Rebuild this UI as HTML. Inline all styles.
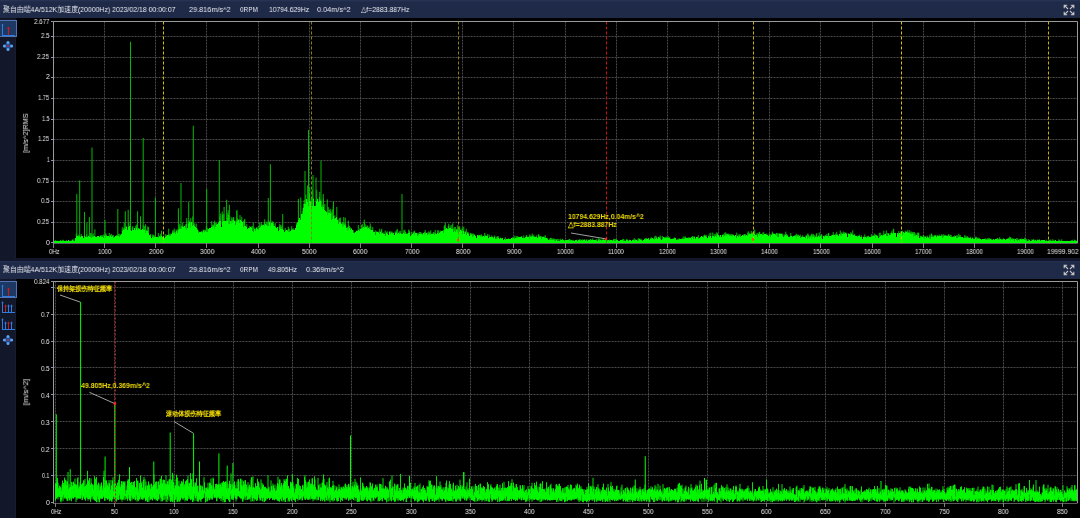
<!DOCTYPE html>
<html><head><meta charset="utf-8"><style>
html,body{margin:0;padding:0;}
body{width:1080px;height:518px;overflow:hidden;background:#12172a;position:relative;font-family:"Liberation Sans",sans-serif;}
.hdr{position:absolute;left:0;width:1080px;background:#1f2a48;}
.blk{position:absolute;left:16px;width:1064px;background:#000;}
svg{position:absolute;left:0;top:0;}
.t{position:absolute;white-space:nowrap;transform-origin:0 50%;will-change:transform;}
</style></head><body>
<div class="hdr" style="top:0;height:18.5px;background:linear-gradient(#2a3658 0,#1f2a48 2px,#1f2a48 100%)"></div>
<div style="position:absolute;left:15px;top:19px;width:1px;height:240px;background:#171c33"></div>
<div style="position:absolute;left:15px;top:279px;width:1px;height:240px;background:#171c33"></div>
<div style="position:absolute;left:0;top:18px;width:1080px;height:1px;background:#10141f"></div>
<div class="blk" style="top:18px;height:240px"></div>
<div class="hdr" style="top:260.5px;height:18px;background:linear-gradient(#28345a 0,#1f2a48 1.5px,#1f2a48 100%)"></div>
<div class="blk" style="top:278.5px;height:240px"></div>
<svg width="1080" height="518" viewBox="0 0 1080 518">
<line x1="53.5" y1="222.5" x2="1077.5" y2="222.5" stroke="#4a4a4a" stroke-dasharray="2 1"/><line x1="53.5" y1="201.5" x2="1077.5" y2="201.5" stroke="#4a4a4a" stroke-dasharray="2 1"/><line x1="53.5" y1="181.5" x2="1077.5" y2="181.5" stroke="#4a4a4a" stroke-dasharray="2 1"/><line x1="53.5" y1="160.5" x2="1077.5" y2="160.5" stroke="#4a4a4a" stroke-dasharray="2 1"/><line x1="53.5" y1="139.5" x2="1077.5" y2="139.5" stroke="#4a4a4a" stroke-dasharray="2 1"/><line x1="53.5" y1="119.5" x2="1077.5" y2="119.5" stroke="#4a4a4a" stroke-dasharray="2 1"/><line x1="53.5" y1="98.5" x2="1077.5" y2="98.5" stroke="#4a4a4a" stroke-dasharray="2 1"/><line x1="53.5" y1="77.5" x2="1077.5" y2="77.5" stroke="#4a4a4a" stroke-dasharray="2 1"/><line x1="53.5" y1="57.5" x2="1077.5" y2="57.5" stroke="#4a4a4a" stroke-dasharray="2 1"/><line x1="53.5" y1="36.5" x2="1077.5" y2="36.5" stroke="#4a4a4a" stroke-dasharray="2 1"/><line x1="104.5" y1="21.5" x2="104.5" y2="242.5" stroke="#4a4a4a" stroke-dasharray="2 1"/><line x1="155.5" y1="21.5" x2="155.5" y2="242.5" stroke="#4a4a4a" stroke-dasharray="2 1"/><line x1="206.5" y1="21.5" x2="206.5" y2="242.5" stroke="#4a4a4a" stroke-dasharray="2 1"/><line x1="258.5" y1="21.5" x2="258.5" y2="242.5" stroke="#4a4a4a" stroke-dasharray="2 1"/><line x1="309.5" y1="21.5" x2="309.5" y2="242.5" stroke="#4a4a4a" stroke-dasharray="2 1"/><line x1="360.5" y1="21.5" x2="360.5" y2="242.5" stroke="#4a4a4a" stroke-dasharray="2 1"/><line x1="411.5" y1="21.5" x2="411.5" y2="242.5" stroke="#4a4a4a" stroke-dasharray="2 1"/><line x1="462.5" y1="21.5" x2="462.5" y2="242.5" stroke="#4a4a4a" stroke-dasharray="2 1"/><line x1="513.5" y1="21.5" x2="513.5" y2="242.5" stroke="#4a4a4a" stroke-dasharray="2 1"/><line x1="565.5" y1="21.5" x2="565.5" y2="242.5" stroke="#4a4a4a" stroke-dasharray="2 1"/><line x1="616.5" y1="21.5" x2="616.5" y2="242.5" stroke="#4a4a4a" stroke-dasharray="2 1"/><line x1="667.5" y1="21.5" x2="667.5" y2="242.5" stroke="#4a4a4a" stroke-dasharray="2 1"/><line x1="718.5" y1="21.5" x2="718.5" y2="242.5" stroke="#4a4a4a" stroke-dasharray="2 1"/><line x1="769.5" y1="21.5" x2="769.5" y2="242.5" stroke="#4a4a4a" stroke-dasharray="2 1"/><line x1="820.5" y1="21.5" x2="820.5" y2="242.5" stroke="#4a4a4a" stroke-dasharray="2 1"/><line x1="872.5" y1="21.5" x2="872.5" y2="242.5" stroke="#4a4a4a" stroke-dasharray="2 1"/><line x1="923.5" y1="21.5" x2="923.5" y2="242.5" stroke="#4a4a4a" stroke-dasharray="2 1"/><line x1="974.5" y1="21.5" x2="974.5" y2="242.5" stroke="#4a4a4a" stroke-dasharray="2 1"/><line x1="1025.5" y1="21.5" x2="1025.5" y2="242.5" stroke="#4a4a4a" stroke-dasharray="2 1"/><path d="M54.75 242.1V240.8M55.25 241.6V241.4M55.75 241.6V239.9M57.75 242.2V240.7M58.25 241.7V240.9M59.75 242.2V241.1M60.25 242.2V240.5M60.75 242.2V239.9M62.75 242.2V239.9M63.25 241.7V239.8M66.25 242.2V239.9M67.25 242.2V241.2M67.75 242.2V241.2M68.25 241.4V240.6M70.25 242.2V240.6M71.25 242.2V240.9M71.75 242.2V240.7M72.25 241.3V239.3M73.75 242.2V239.4M74.25 242.2V241.0M75.25 239.0V238.2M75.75 239.0V238.6M76.25 236.7V233.4M76.75 236.7V235.7M78.25 237.8V235.8M78.75 237.8V234.5M79.75 236.6V235.9M81.25 237.2V234.1M84.25 237.1V236.6M84.75 237.1V235.2M86.25 239.9V236.2M86.75 239.9V234.1M89.25 239.0V234.6M90.25 240.0V233.0M90.75 240.0V236.4M91.25 239.7V233.2M92.25 237.6V234.8M93.25 238.2V233.3M93.75 238.2V236.1M94.25 237.3V236.2M97.25 238.3V236.8M100.25 237.0V235.2M101.75 238.4V235.1M102.25 238.3V235.4M103.75 239.0V234.4M104.25 239.6V236.4M104.75 239.6V235.6M105.25 239.3V234.5M105.75 239.3V233.1M106.25 237.4V234.5M107.75 237.2V236.2M108.75 239.1V236.3M109.25 238.8V233.0M110.25 237.1V235.1M110.75 237.1V234.8M111.25 239.5V233.8M112.75 237.1V235.1M113.25 238.8V235.2M115.75 237.5V236.6M116.25 236.8V235.0M116.75 236.8V235.9M117.25 237.4V235.0M118.75 236.7V233.7M119.25 237.5V234.2M121.25 234.9V233.4M122.25 232.8V227.2M123.25 231.3V229.3M123.75 231.3V228.3M124.25 233.9V222.5M124.75 233.9V228.0M125.25 229.9V226.6M125.75 229.9V227.0M126.25 227.6V226.2M128.75 228.6V222.5M130.25 230.6V224.3M132.25 231.1V227.5M132.75 231.1V226.1M135.75 231.2V225.8M136.75 229.4V224.5M137.25 231.5V225.6M138.25 232.5V227.9M138.75 232.5V228.1M140.75 232.9V228.8M143.25 232.1V225.3M144.75 231.0V226.3M145.25 234.9V225.7M145.75 234.9V229.8M146.25 232.6V229.9M147.75 231.8V226.4M148.25 237.1V231.1M149.25 236.2V235.0M150.25 236.8V235.0M150.75 236.8V234.0M152.75 239.8V234.5M153.25 239.2V235.0M153.75 239.2V235.8M154.75 237.8V235.7M155.25 238.9V236.9M157.25 239.0V237.2M157.75 239.0V237.3M158.75 239.4V236.6M159.25 238.6V235.7M159.75 238.6V236.0M160.25 240.1V236.6M160.75 240.1V233.8M161.25 240.0V234.5M161.75 240.0V236.6M163.25 240.1V235.8M165.25 237.6V234.4M166.25 238.0V234.6M168.75 236.4V234.2M169.75 238.5V234.3M170.25 238.3V233.6M172.25 234.5V232.1M172.75 234.5V230.2M173.75 235.2V230.6M174.25 233.8V228.5M174.75 233.8V232.2M175.25 235.2V231.8M176.25 232.3V229.7M177.75 234.4V229.3M178.75 233.8V229.4M179.25 230.3V227.5M179.75 230.3V224.1M180.75 230.4V228.1M181.25 229.9V226.1M181.75 229.9V226.0M182.25 231.6V225.8M182.75 231.6V222.6M184.25 227.4V226.0M185.75 231.1V224.5M186.25 230.9V223.9M186.75 230.9V218.1M188.25 227.1V221.5M188.75 227.1V222.1M189.25 224.3V220.6M190.25 228.5V222.5M190.75 228.5V218.1M192.75 227.4V216.4M193.75 227.4V223.6M194.75 226.5V223.2M196.25 234.2V223.7M197.25 230.7V228.6M198.75 236.3V230.5M200.25 233.3V232.2M201.25 235.1V231.0M201.75 235.1V231.9M202.25 235.7V231.6M203.25 234.7V229.6M203.75 234.7V230.1M204.25 233.1V229.8M205.75 232.9V229.9M206.25 232.6V226.3M206.75 232.6V229.9M207.25 233.1V227.9M211.75 229.8V221.2M212.75 231.5V224.6M213.25 230.9V224.6M213.75 230.9V225.8M214.25 229.6V222.4M214.75 229.6V220.6M215.75 228.2V222.9M216.25 226.4V223.2M218.25 225.4V222.7M218.75 225.4V222.1M219.75 225.2V216.6M220.75 224.8V213.5M222.25 222.5V211.5M222.75 222.5V214.7M223.75 221.8V213.8M225.75 222.2V220.9M227.25 221.8V217.8M227.75 221.8V213.1M228.25 224.5V210.2M228.75 224.5V215.0M229.25 228.1V215.2M229.75 228.1V216.3M231.25 224.6V220.9M231.75 224.6V217.3M232.25 224.0V219.5M232.75 224.0V220.3M233.25 221.4V217.3M233.75 221.4V217.1M234.25 221.5V220.7M235.25 226.9V220.6M236.75 224.3V211.1M237.25 222.0V218.0M237.75 222.0V219.3M238.75 220.8V219.4M239.75 223.7V219.6M241.75 222.0V216.8M242.25 223.9V222.2M243.75 227.8V221.0M244.25 229.3V220.1M244.75 229.3V218.8M246.75 230.2V224.2M249.75 229.2V225.9M250.25 227.9V227.5M251.25 229.4V226.7M252.25 231.8V226.0M253.25 232.9V222.7M254.25 229.5V227.5M255.75 232.1V229.0M256.25 232.5V228.0M256.75 232.5V227.1M258.25 232.4V226.3M259.75 228.9V222.6M260.25 231.5V225.4M261.25 226.6V222.2M261.75 226.6V224.5M262.25 227.2V224.7M262.75 227.2V224.9M264.25 228.5V222.6M264.75 228.5V219.3M266.25 225.8V221.7M267.25 228.0V222.6M268.25 226.8V220.2M269.75 222.7V221.5M270.25 226.7V221.8M270.75 226.7V220.3M272.25 224.2V221.1M273.25 228.8V221.8M273.75 228.8V223.8M275.25 229.4V223.2M279.25 231.6V226.4M279.75 231.6V223.8M280.25 231.9V226.9M280.75 231.9V224.9M281.75 230.0V226.5M282.25 229.9V224.8M285.25 232.3V227.9M286.25 231.0V230.1M286.75 231.0V229.8M287.25 232.2V230.0M288.25 235.0V226.6M288.75 235.0V228.9M289.25 234.2V228.7M291.75 232.1V226.1M292.25 234.2V229.2M292.75 234.2V228.8M293.25 231.1V228.4M296.75 225.7V223.3M297.25 226.4V222.0M302.75 214.8V210.9M303.25 212.8V207.6M303.75 212.8V203.8M304.25 205.3V199.9M305.75 205.0V194.5M307.75 202.9V185.3M308.25 207.9V186.1M308.75 207.9V194.6M309.25 201.6V194.0M309.75 201.6V187.3M311.25 207.0V198.3M312.25 206.8V189.7M313.25 200.2V197.9M316.75 207.4V190.1M319.25 205.8V197.2M319.75 205.8V191.8M320.25 201.5V199.5M321.25 213.8V200.8M322.25 216.5V204.7M322.75 216.5V205.8M323.25 208.4V194.1M324.75 211.5V203.9M327.25 216.3V199.4M327.75 216.3V211.7M328.25 220.3V207.1M329.25 217.3V209.7M330.25 214.9V208.7M330.75 214.9V211.5M331.75 222.7V212.6M332.25 220.4V209.5M333.25 219.8V205.6M334.75 220.1V215.3M338.25 225.1V219.5M339.75 222.9V218.0M340.25 225.8V217.5M340.75 225.8V221.7M342.25 230.2V222.3M342.75 230.2V223.3M343.25 227.0V223.6M343.75 227.0V217.0M344.75 226.3V223.2M345.25 229.0V217.7M345.75 229.0V224.2M347.25 231.9V227.2M347.75 231.9V227.5M348.25 230.7V220.7M348.75 230.7V225.6M349.25 229.1V226.0M350.25 232.5V227.4M351.25 230.9V228.0M353.25 234.4V230.3M355.25 233.0V231.7M355.75 233.0V232.3M356.75 234.9V230.3M358.25 231.4V225.1M359.75 232.2V228.5M361.25 229.8V228.4M361.75 229.8V224.9M362.25 229.4V223.8M363.75 228.4V226.7M364.25 228.9V219.6M365.75 228.3V224.5M366.75 233.3V227.9M367.25 232.3V225.4M367.75 232.3V226.1M368.75 228.6V227.8M369.25 230.9V226.6M370.25 232.7V227.2M370.75 232.7V225.8M372.75 233.0V227.0M373.25 232.9V231.6M374.25 233.0V232.0M375.25 236.3V230.4M376.75 233.2V231.2M377.75 235.0V232.8M378.25 233.8V231.7M378.75 233.8V231.9M379.75 235.2V228.7M380.25 233.2V231.8M380.75 233.2V232.4M381.25 235.3V230.6M381.75 235.3V228.7M383.75 234.5V232.4M385.25 236.5V230.5M386.75 233.9V232.2M387.25 234.7V231.3M389.75 236.9V231.2M390.75 235.2V231.6M391.25 237.3V231.7M392.25 237.3V231.7M392.75 237.3V233.1M393.25 234.2V233.1M395.25 233.9V231.3M395.75 233.9V232.7M396.25 234.0V232.3M396.75 234.0V230.1M397.25 235.4V228.9M398.75 233.9V232.7M399.25 234.9V231.5M400.25 233.9V230.8M403.75 237.3V230.4M404.75 235.3V229.7M405.25 235.8V231.6M405.75 235.8V232.2M407.25 235.4V233.2M408.75 235.7V229.5M409.25 237.6V230.6M409.75 237.6V231.8M411.75 235.5V232.3M413.25 234.0V231.8M414.25 237.8V230.7M414.75 237.8V231.4M417.75 237.1V233.3M418.25 235.7V232.7M419.75 235.0V232.0M420.25 234.9V232.1M421.25 236.4V232.7M422.75 235.8V233.7M423.25 236.9V233.0M424.25 236.3V232.6M424.75 236.3V231.8M425.25 234.6V230.1M425.75 234.6V232.9M427.25 235.6V232.3M428.75 235.1V231.3M429.25 235.9V232.5M429.75 235.9V232.3M430.25 235.8V233.5M430.75 235.8V230.3M431.75 236.2V233.8M432.25 234.6V233.8M432.75 234.6V234.2M433.25 236.7V232.6M433.75 236.7V231.8M434.75 235.8V232.7M435.25 235.3V229.9M435.75 235.3V233.4M437.75 234.6V230.4M438.25 234.9V230.2M439.25 234.9V232.4M440.25 233.3V230.5M441.25 232.6V231.3M443.25 234.5V230.0M444.25 232.7V226.2M444.75 232.7V225.2M445.25 231.9V222.7M446.25 228.9V228.1M446.75 228.9V228.1M448.25 232.4V226.0M448.75 232.4V223.7M450.25 229.4V225.6M451.75 233.0V225.0M452.75 230.6V223.4M453.75 233.2V228.4M454.75 231.6V227.0M455.25 233.2V226.9M456.25 232.5V229.0M456.75 232.5V229.6M457.25 233.5V229.2M457.75 233.5V225.0M458.25 231.5V228.5M459.25 232.8V227.5M459.75 232.8V226.2M460.25 231.1V230.6M460.75 231.1V229.4M461.25 232.8V229.7M461.75 232.8V231.1M462.25 236.1V227.4M463.25 232.1V230.6M463.75 232.1V226.6M464.75 234.6V231.7M465.75 232.5V231.1M466.25 236.3V228.8M467.75 234.2V231.8M468.25 234.8V232.5M470.25 236.1V233.2M470.75 236.1V232.8M471.25 236.3V234.1M471.75 236.3V233.5M472.75 238.3V233.8M473.25 237.0V233.7M474.25 238.8V234.1M474.75 238.8V235.4M478.75 237.0V234.7M479.25 237.3V235.0M479.75 237.3V235.1M480.25 237.5V234.9M480.75 237.5V236.2M481.25 239.5V234.3M481.75 239.5V235.6M482.25 238.0V235.8M483.25 238.4V235.9M484.75 238.4V232.9M485.25 237.1V234.9M486.75 239.3V236.1M487.25 237.0V235.5M487.75 237.0V233.9M489.25 237.5V234.6M491.75 239.6V235.4M492.75 237.9V236.7M493.25 240.3V237.6M494.25 238.4V236.5M494.75 238.4V235.5M495.75 240.1V237.8M496.75 239.6V236.8M497.25 240.4V236.9M497.75 240.4V236.2M498.25 238.9V236.4M498.75 238.9V238.1M499.25 240.1V238.9M500.25 239.8V237.6M500.75 239.8V238.0M501.25 239.7V237.8M505.25 242.0V237.2M506.75 241.0V238.8M507.25 240.2V239.0M507.75 240.2V239.2M508.25 239.6V238.3M508.75 239.6V239.5M512.25 239.8V237.8M512.75 239.8V237.3M513.25 239.3V237.3M513.75 239.3V238.2M514.75 240.1V235.8M516.25 239.1V236.2M517.25 241.0V236.0M517.75 241.0V236.8M518.25 238.3V236.9M518.75 238.3V237.1M521.25 238.7V236.5M521.75 238.7V236.0M523.75 239.5V235.5M526.25 237.9V235.4M526.75 237.9V235.2M527.25 239.9V237.5M528.75 239.1V237.2M529.25 239.7V236.0M529.75 239.7V234.4M530.75 239.3V235.5M531.25 237.6V235.8M532.25 237.4V233.6M533.25 237.8V236.5M533.75 237.8V234.8M534.25 237.9V236.3M536.25 238.0V235.3M538.25 238.0V234.7M538.75 238.0V234.1M539.25 238.4V235.7M540.25 238.1V236.5M540.75 238.1V235.9M541.75 240.0V236.3M542.75 240.0V237.6M543.25 238.2V236.6M543.75 238.2V237.3M544.25 238.7V236.5M544.75 238.7V237.2M545.25 241.2V235.1M546.25 239.4V238.7M547.25 240.0V237.7M549.25 241.9V238.8M550.25 240.7V238.0M550.75 240.7V237.8M551.25 240.7V239.8M551.75 240.7V238.0M552.75 242.2V239.0M553.25 241.0V238.3M554.25 241.8V238.7M554.75 241.8V239.3M555.75 241.6V239.2M556.25 240.9V239.0M557.25 241.7V238.8M558.75 241.7V239.0M560.25 242.2V238.7M560.75 242.2V240.3M562.25 241.7V238.7M562.75 241.7V239.2M563.75 242.2V240.3M564.25 241.6V240.6M565.75 241.1V240.5M568.25 241.8V239.7M568.75 241.8V239.8M569.25 242.2V239.2M569.75 242.2V239.2M570.25 241.8V239.7M570.75 241.8V240.1M571.25 242.2V240.1M571.75 242.2V240.0M572.25 242.0V240.0M573.25 242.2V239.8M574.25 242.2V240.9M576.75 241.1V239.7M578.25 242.2V240.9M579.25 241.4V239.3M580.25 242.0V239.2M581.25 242.2V239.9M581.75 242.2V239.9M582.75 242.1V239.3M583.75 241.0V240.1M584.25 241.4V239.0M585.25 241.7V240.3M585.75 241.7V240.6M586.75 242.2V239.1M588.75 241.3V239.8M590.25 241.6V238.8M590.75 241.6V239.4M591.25 240.8V239.6M591.75 240.8V240.3M592.75 242.2V238.3M593.25 241.4V240.0M594.75 240.8V240.2M596.25 242.2V239.1M596.75 242.2V239.8M598.25 240.7V238.3M598.75 240.7V239.9M599.25 241.9V238.6M599.75 241.9V239.7M600.25 241.0V239.5M600.75 241.0V240.2M601.75 241.8V239.6M602.25 240.8V239.7M602.75 240.8V240.0M603.25 240.9V238.4M603.75 240.9V240.5M604.25 242.2V240.3M604.75 242.2V239.6M605.25 241.7V240.2M605.75 241.7V238.9M606.25 241.7V239.0M607.25 241.9V240.0M607.75 241.9V239.9M608.75 241.7V240.0M609.75 242.0V239.5M611.75 242.2V240.1M612.25 242.2V240.3M613.25 242.2V240.4M613.75 242.2V238.8M614.25 242.2V239.1M615.25 242.2V238.9M616.25 240.9V238.9M622.25 241.3V240.0M622.75 241.3V239.0M623.25 242.2V238.9M624.25 242.2V239.6M626.25 241.0V239.3M626.75 241.0V239.8M627.25 241.5V239.3M627.75 241.5V240.4M629.25 241.1V240.2M629.75 241.1V239.7M632.75 242.2V240.7M633.25 241.0V239.8M633.75 241.0V239.7M634.25 242.2V238.2M635.25 240.7V239.2M637.25 242.2V239.6M638.25 242.0V238.2M639.25 242.1V238.5M640.75 240.5V238.7M641.75 241.7V239.2M645.25 241.9V238.0M645.75 241.9V239.1M646.25 240.5V237.9M647.75 240.2V238.9M648.25 239.9V237.8M648.75 239.9V238.0M650.75 240.2V238.0M651.25 241.3V237.2M651.75 241.3V238.5M653.25 239.8V238.8M654.25 240.8V237.7M654.75 240.8V236.4M655.75 240.3V235.7M656.75 239.2V236.7M658.25 238.3V236.9M659.25 239.7V236.8M660.25 240.2V235.6M662.25 239.9V235.9M664.25 238.9V237.0M665.75 240.7V236.7M666.25 238.6V238.5M666.75 238.6V236.6M667.25 238.8V237.5M667.75 238.8V237.5M668.25 239.3V236.2M669.25 239.1V237.9M669.75 239.1V237.1M672.75 241.8V238.6M673.75 240.1V238.6M674.25 240.0V237.4M674.75 240.0V237.7M677.25 240.9V239.0M678.25 240.9V238.7M679.25 241.9V238.4M680.25 241.2V238.8M682.25 240.2V238.0M683.25 239.5V236.5M684.75 241.8V236.5M685.25 239.3V237.9M685.75 239.3V236.6M688.25 240.2V237.2M688.75 240.2V237.9M689.25 239.3V237.4M690.75 240.0V238.0M691.25 240.6V236.9M691.75 240.6V237.0M692.25 240.2V236.6M692.75 240.2V236.1M693.25 240.2V236.6M694.25 238.4V236.4M695.75 241.0V238.2M697.25 238.3V237.3M698.25 240.4V235.2M700.75 237.6V237.2M702.75 238.5V236.8M703.25 240.4V235.7M704.25 239.8V235.5M704.75 239.8V234.5M705.25 239.4V235.6M706.25 238.4V234.9M709.25 237.8V233.6M710.25 237.2V236.3M710.75 237.2V232.8M712.25 238.8V236.1M712.75 238.8V232.6M714.25 238.9V233.9M715.75 237.1V234.3M716.25 237.7V232.4M717.25 236.2V233.7M717.75 236.2V232.8M719.25 238.3V235.7M722.25 236.6V235.1M722.75 236.6V234.8M723.25 239.3V234.0M723.75 239.3V234.9M724.75 238.1V232.7M725.75 238.7V232.3M726.25 238.1V234.1M726.75 238.1V233.7M727.25 238.0V234.0M727.75 238.0V233.8M728.25 236.5V233.7M729.25 236.9V233.9M729.75 236.9V235.2M730.25 236.6V234.2M730.75 236.6V235.5M731.75 237.1V233.9M732.25 238.1V235.2M732.75 238.1V234.2M733.25 236.2V235.6M733.75 236.2V235.9M736.75 239.1V232.6M737.75 236.7V235.6M738.75 239.3V235.1M739.25 236.6V234.2M739.75 236.6V236.1M740.25 238.2V234.2M743.75 238.7V234.4M744.25 238.8V234.7M744.75 238.8V234.0M745.25 237.3V234.2M747.75 236.6V232.6M748.25 238.8V231.3M748.75 238.8V233.4M749.25 234.9V232.7M751.25 234.9V231.0M751.75 234.9V232.7M752.25 237.9V233.3M752.75 237.9V232.4M753.75 236.8V230.7M754.25 234.7V234.0M754.75 234.7V229.6M756.25 236.9V233.3M757.75 237.6V232.9M758.75 236.6V233.9M759.25 236.5V231.9M759.75 236.5V231.9M762.75 235.5V232.6M763.75 238.3V232.2M764.25 235.2V234.8M764.75 235.2V233.8M766.25 236.1V234.1M766.75 236.1V233.5M769.25 235.6V233.4M770.75 238.2V234.1M771.25 237.6V234.7M772.25 235.0V231.6M772.75 235.0V233.1M773.25 238.6V233.6M773.75 238.6V233.9M774.25 235.0V233.6M775.75 235.5V233.9M776.25 238.3V233.3M776.75 238.3V232.8M777.25 237.6V233.4M778.25 237.5V233.3M779.75 234.8V232.9M781.25 234.9V233.5M782.25 237.1V233.6M782.75 237.1V234.7M784.25 238.4V234.2M785.75 236.1V231.7M786.25 237.5V234.6M786.75 237.5V233.9M787.25 238.9V235.2M787.75 238.9V235.0M790.25 238.9V235.8M790.75 238.9V233.0M791.75 237.3V235.6M792.25 239.4V236.7M793.75 237.2V236.9M794.75 237.4V235.5M795.25 238.2V235.1M795.75 238.2V235.5M796.25 239.9V233.7M796.75 239.9V235.3M797.25 239.3V234.7M798.25 237.9V234.8M798.75 237.9V234.8M799.25 237.4V236.2M800.25 239.8V234.6M802.25 237.7V236.2M802.75 237.7V235.2M805.75 239.3V235.5M806.75 239.7V234.9M807.75 239.7V233.5M808.25 239.1V234.3M808.75 239.1V235.4M809.25 239.5V236.4M809.75 239.5V236.9M810.25 239.5V235.6M810.75 239.5V235.9M811.25 239.5V234.5M811.75 239.5V233.7M812.75 237.8V234.7M813.25 238.4V233.9M813.75 238.4V236.1M814.25 240.1V234.9M815.25 238.1V235.9M816.25 239.4V234.1M816.75 239.4V233.1M818.25 237.3V235.3M819.25 238.2V232.5M821.25 239.1V234.2M821.75 239.1V234.5M824.25 237.8V235.7M825.25 237.9V235.0M826.75 237.1V234.0M828.25 238.8V233.0M828.75 238.8V233.3M831.25 237.1V235.9M831.75 237.1V234.8M832.25 236.4V235.4M833.25 236.3V232.1M834.75 237.1V235.5M835.25 237.9V234.5M835.75 237.9V233.5M836.75 235.7V231.8M837.75 236.2V234.2M840.25 236.6V230.5M840.75 236.6V234.4M841.25 237.9V233.3M841.75 237.9V232.4M843.25 235.7V231.5M843.75 235.7V233.1M844.75 235.1V232.1M845.25 234.4V233.8M846.25 234.5V232.6M848.25 234.7V233.0M850.25 236.9V234.7M850.75 236.9V232.2M851.25 235.4V232.8M852.25 236.3V234.5M852.75 236.3V230.3M853.25 237.9V234.8M854.75 235.8V233.7M857.25 239.4V235.5M859.25 236.7V234.6M861.25 238.9V235.2M863.25 238.2V236.5M864.75 238.9V234.4M866.75 239.2V236.3M867.75 238.2V236.1M868.25 239.6V235.7M868.75 239.6V236.2M871.25 238.4V234.2M871.75 238.4V235.8M873.75 239.3V235.4M874.25 237.0V233.5M874.75 237.0V235.7M875.25 239.1V234.4M875.75 239.1V235.1M876.25 237.2V234.9M876.75 237.2V234.9M879.25 239.3V232.8M880.25 238.7V232.7M881.75 236.4V235.8M882.25 237.2V234.5M883.75 237.4V230.8M884.75 235.6V234.0M885.25 235.1V233.6M886.25 238.4V230.4M887.25 237.7V232.9M888.25 234.9V233.1M888.75 234.9V233.3M890.75 237.8V232.8M891.75 237.4V231.2M892.25 235.4V232.9M893.25 233.6V229.4M893.75 233.6V228.8M895.25 233.8V232.8M898.25 234.9V233.4M898.75 234.9V231.1M900.25 235.1V232.9M900.75 235.1V231.3M901.25 236.7V232.1M901.75 236.7V231.0M902.25 235.8V230.7M903.25 233.5V232.5M905.25 233.4V230.6M906.25 234.4V231.3M907.25 233.6V231.8M907.75 233.6V229.8M908.75 235.2V231.9M909.25 237.4V233.0M909.75 237.4V230.2M910.75 235.0V232.3M911.25 235.6V231.5M912.25 234.7V233.2M912.75 234.7V231.9M913.25 238.3V233.8M913.75 238.3V232.1M914.25 236.9V232.0M914.75 236.9V234.8M915.25 237.2V233.4M916.25 236.4V235.6M917.25 239.1V232.7M917.75 239.1V234.5M918.25 236.5V232.6M918.75 236.5V232.8M920.25 240.3V235.8M920.75 240.3V236.0M921.25 239.2V236.2M921.75 239.2V236.5M923.25 240.0V234.9M923.75 240.0V236.8M924.25 239.7V236.2M924.75 239.7V236.9M925.75 238.4V236.0M927.25 238.1V235.6M928.75 239.3V237.1M929.25 239.8V236.7M929.75 239.8V234.6M930.25 239.9V236.4M931.25 237.6V233.6M931.75 237.6V233.9M932.75 238.3V235.4M933.75 238.3V236.4M934.25 238.0V235.2M935.25 238.8V234.9M935.75 238.8V235.3M937.25 237.7V234.9M938.25 237.1V235.9M939.25 237.0V234.6M941.25 237.4V234.3M941.75 237.4V235.5M942.75 239.3V235.2M943.25 237.5V234.2M943.75 237.5V236.8M944.25 237.0V235.6M944.75 237.0V234.8M945.75 240.2V235.0M946.25 237.4V235.5M947.75 237.6V235.6M948.25 238.4V234.7M948.75 238.4V234.0M950.25 238.2V234.7M951.25 238.0V235.1M952.25 239.0V236.7M953.75 239.1V236.0M954.75 238.5V235.5M956.75 239.0V235.3M957.25 239.0V235.2M958.75 239.4V233.7M959.75 239.8V235.3M960.25 237.8V235.1M961.75 240.5V237.3M962.75 238.2V237.5M964.75 241.3V235.2M965.25 240.4V235.8M966.75 240.9V236.6M967.25 238.9V236.1M967.75 238.9V237.1M968.75 239.1V237.3M970.25 239.5V236.7M970.75 239.5V238.1M972.25 239.3V237.8M972.75 239.3V237.4M973.25 239.8V238.8M975.75 240.7V236.6M976.25 241.0V236.9M976.75 241.0V238.5M977.25 240.6V237.7M977.75 240.6V238.3M978.75 239.9V237.6M979.25 239.7V238.1M980.75 241.0V238.8M981.25 241.2V239.6M983.75 240.3V240.0M984.25 240.8V239.7M984.75 240.8V238.7M985.25 242.0V239.7M985.75 242.0V238.4M986.25 242.2V239.1M987.25 241.1V238.5M987.75 241.1V238.7M988.25 242.2V238.4M988.75 242.2V238.8M989.25 241.2V238.3M989.75 241.2V238.4M991.25 242.2V238.7M993.25 240.2V239.2M993.75 240.2V239.2M995.25 240.3V239.1M996.25 240.8V239.1M996.75 240.8V239.3M997.25 242.2V238.1M997.75 242.2V238.0M998.25 240.8V239.9M998.75 240.8V238.8M999.25 240.9V238.9M999.75 240.9V237.2M1000.25 240.4V239.1M1001.75 240.5V238.8M1002.25 240.5V239.6M1002.75 240.5V239.6M1003.25 240.3V238.8M1003.75 240.3V238.3M1004.75 240.3V239.1M1007.25 241.5V238.9M1007.75 241.5V238.8M1008.25 240.2V238.0M1008.75 240.2V238.7M1009.25 240.8V237.8M1009.75 240.8V236.7M1010.25 242.2V237.8M1010.75 242.2V237.2M1011.25 241.8V238.6M1011.75 241.8V239.0M1012.25 240.8V239.2M1012.75 240.8V238.0M1013.75 239.9V239.0M1014.75 241.5V238.6M1016.75 242.2V238.0M1017.75 242.2V238.5M1019.25 242.2V239.0M1019.75 242.2V239.9M1020.25 240.4V238.8M1021.25 240.8V239.3M1021.75 240.8V238.5M1022.75 241.0V240.2M1024.75 240.8V237.6M1025.25 240.6V238.4M1026.25 241.6V239.7M1026.75 241.6V239.0M1028.75 242.2V239.1M1031.75 241.5V239.4M1033.25 240.9V238.8M1034.75 241.6V239.7M1035.25 240.9V239.8M1037.25 241.2V239.5M1038.75 241.4V240.8M1039.25 241.0V239.1M1040.75 242.2V240.4M1041.75 242.2V240.1M1046.25 241.6V239.6M1048.75 242.2V240.1M1049.75 242.2V240.0M1050.25 242.2V239.5M1050.75 242.2V240.9M1051.25 242.2V240.8M1052.25 242.2V239.3M1053.75 242.2V239.7M1055.25 241.4V240.6M1056.75 242.1V241.1M1058.75 241.6V239.5M1059.75 241.7V239.7M1061.75 242.2V239.3M1063.25 242.2V241.1M1065.75 241.7V241.0M1066.75 242.2V240.8M1067.25 242.2V241.2M1069.25 242.2V241.1M1071.25 241.8V240.1M1071.75 241.8V241.0M1072.25 242.2V239.8M1073.75 242.2V241.4M1074.25 242.2V239.6M1074.75 242.2V240.0M1075.25 242.2V240.1M1076.75 242.2V240.7" stroke="#00f000" stroke-width="0.8" fill="none"/><path d="M76.80 243V193.9M79.70 243V180.4M84.50 243V212.0M86.90 243V222.9M89.40 243V217.1M92.00 243V147.5M94.90 243V229.4M105.00 243V220.0M117.80 243V209.0M125.30 243V211.3M128.20 243V209.8M130.50 243V41.8M137.60 243V211.3M140.50 243V216.3M143.20 243V138.0M145.60 243V224.3M148.50 243V227.2M155.40 243V197.5M158.30 243V233.0M161.50 243V230.8M168.70 243V228.7M178.40 243V208.4M181.00 243V183.0M183.20 243V228.7M188.70 243V201.9M193.30 243V125.8M206.70 243V188.8M219.30 243V160.0M224.10 243V207.0M226.60 243V199.7M229.40 243V204.8M237.00 243V209.8M240.00 243V215.0M268.30 243V198.0M270.40 243V164.2M282.70 243V214.0M298.40 243V199.0M300.80 243V197.5M308.50 243V130.0M305.00 243V171.0M313.00 243V175.0M316.00 243V177.5M321.00 243V160.6M323.40 243V198.6M333.50 243V201.4M336.80 243V206.9M364.40 243V222.5M370.20 243V223.4M402.00 243V194.0" stroke="#00bc00" stroke-width="1" fill="none"/><path d="M54.5 243V240.8M55.5 243V240.6M56.5 243V240.7M57.5 243V241.2M58.5 243V240.7M59.5 243V241.1M60.5 243V241.2M61.5 243V240.8M62.5 243V240.9M63.5 243V240.7M64.5 243V240.9M65.5 243V241.2M66.5 243V241.2M67.5 243V240.8M68.5 243V240.4M69.5 243V240.5M70.5 243V241.2M71.5 243V240.5M72.5 243V240.3M73.5 243V241.2M74.5 243V241.2M75.5 243V238.0M76.5 243V235.7M77.5 243V235.7M78.5 243V236.8M79.5 243V235.6M80.5 243V237.1M81.5 243V236.2M82.5 243V236.1M83.5 243V238.2M84.5 243V236.1M85.5 243V236.8M86.5 243V236.6M87.5 243V237.0M88.5 243V235.8M89.5 243V237.0M90.5 243V236.7M91.5 243V238.3M92.5 243V236.6M93.5 243V237.2M94.5 243V236.3M95.5 243V236.7M96.5 243V236.9M97.5 243V235.8M98.5 243V236.2M99.5 243V236.6M100.5 243V236.0M101.5 243V237.4M102.5 243V237.3M103.5 243V238.0M104.5 243V236.1M105.5 243V238.3M106.5 243V236.4M107.5 243V236.2M108.5 243V236.0M109.5 243V237.3M110.5 243V236.1M111.5 243V236.5M112.5 243V236.1M113.5 243V237.8M114.5 243V236.8M115.5 243V236.1M116.5 243V235.8M117.5 243V235.5M118.5 243V235.7M119.5 243V236.5M120.5 243V235.1M121.5 243V233.6M122.5 243V231.4M123.5 243V230.2M124.5 243V230.2M125.5 243V228.9M126.5 243V226.6M127.5 243V229.5M128.5 243V227.3M129.5 243V225.7M130.5 243V229.6M131.5 243V230.5M132.5 243V230.1M133.5 243V229.8M134.5 243V227.8M135.5 243V230.2M136.5 243V228.4M137.5 243V229.9M138.5 243V228.8M139.5 243V228.9M140.5 243V229.9M141.5 243V229.7M142.5 243V229.3M143.5 243V230.3M144.5 243V230.0M145.5 243V232.8M146.5 243V230.9M147.5 243V230.8M148.5 243V233.3M149.5 243V235.2M150.5 243V235.8M151.5 243V238.0M152.5 243V237.2M153.5 243V237.8M154.5 243V236.8M155.5 243V237.3M156.5 243V237.1M157.5 243V237.1M158.5 243V238.4M159.5 243V237.4M160.5 243V236.9M161.5 243V236.3M162.5 243V237.0M163.5 243V236.4M164.5 243V237.8M165.5 243V236.6M166.5 243V235.7M167.5 243V234.7M168.5 243V234.8M169.5 243V236.1M170.5 243V236.1M171.5 243V233.9M172.5 243V232.9M173.5 243V233.1M174.5 243V232.8M175.5 243V234.2M176.5 243V231.0M177.5 243V233.4M178.5 243V229.6M179.5 243V228.8M180.5 243V229.4M181.5 243V228.9M182.5 243V226.8M183.5 243V227.1M184.5 243V226.4M185.5 243V228.0M186.5 243V229.8M187.5 243V227.6M188.5 243V224.3M189.5 243V222.4M190.5 243V227.5M191.5 243V222.3M192.5 243V226.4M193.5 243V225.1M194.5 243V225.5M195.5 243V227.3M196.5 243V228.3M197.5 243V229.7M198.5 243V232.5M199.5 243V232.1M200.5 243V232.3M201.5 243V232.1M202.5 243V233.4M203.5 243V231.4M204.5 243V232.1M205.5 243V231.2M206.5 243V231.6M207.5 243V232.1M208.5 243V229.1M209.5 243V228.3M210.5 243V227.7M211.5 243V226.8M212.5 243V226.5M213.5 243V226.0M214.5 243V228.6M215.5 243V226.9M216.5 243V225.4M217.5 243V223.7M218.5 243V222.7M219.5 243V221.4M220.5 243V221.1M221.5 243V226.5M222.5 243V221.5M223.5 243V220.8M224.5 243V221.0M225.5 243V221.2M226.5 243V220.9M227.5 243V220.8M228.5 243V223.5M229.5 243V223.5M230.5 243V221.2M231.5 243V223.6M232.5 243V223.0M233.5 243V220.4M234.5 243V220.5M235.5 243V225.1M236.5 243V221.7M237.5 243V221.0M238.5 243V219.8M239.5 243V222.7M240.5 243V220.3M241.5 243V221.0M242.5 243V222.3M243.5 243V226.8M244.5 243V226.4M245.5 243V225.5M246.5 243V226.6M247.5 243V228.8M248.5 243V228.1M249.5 243V228.2M250.5 243V226.9M251.5 243V227.5M252.5 243V230.8M253.5 243V231.9M254.5 243V228.5M255.5 243V231.1M256.5 243V228.4M257.5 243V228.6M258.5 243V229.9M259.5 243V227.9M260.5 243V226.6M261.5 243V225.6M262.5 243V226.2M263.5 243V224.9M264.5 243V225.8M265.5 243V224.4M266.5 243V224.8M267.5 243V226.2M268.5 243V225.8M269.5 243V221.7M270.5 243V225.7M271.5 243V222.9M272.5 243V223.2M273.5 243V225.8M274.5 243V226.2M275.5 243V227.3M276.5 243V227.8M277.5 243V227.4M278.5 243V230.6M279.5 243V229.5M280.5 243V228.9M281.5 243V229.0M282.5 243V228.9M283.5 243V229.5M284.5 243V231.6M285.5 243V231.3M286.5 243V230.0M287.5 243V231.2M288.5 243V231.6M289.5 243V232.1M290.5 243V230.6M291.5 243V230.3M292.5 243V230.1M293.5 243V229.9M294.5 243V230.4M295.5 243V227.5M296.5 243V224.7M297.5 243V222.6M298.5 243V220.0M299.5 243V217.9M300.5 243V219.9M301.5 243V213.9M302.5 243V213.8M303.5 243V208.0M304.5 243V204.3M305.5 243V204.0M306.5 243V199.1M307.5 243V201.9M308.5 243V205.6M309.5 243V200.6M310.5 243V201.2M311.5 243V206.0M312.5 243V205.8M313.5 243V199.2M314.5 243V206.1M315.5 243V205.5M316.5 243V200.6M317.5 243V199.2M318.5 243V202.3M319.5 243V201.1M320.5 243V200.5M321.5 243V206.6M322.5 243V209.1M323.5 243V207.4M324.5 243V209.9M325.5 243V211.4M326.5 243V212.0M327.5 243V215.3M328.5 243V212.7M329.5 243V213.0M330.5 243V213.9M331.5 243V219.9M332.5 243V219.4M333.5 243V216.2M334.5 243V219.1M335.5 243V218.3M336.5 243V217.1M337.5 243V219.7M338.5 243V224.1M339.5 243V221.9M340.5 243V223.2M341.5 243V224.2M342.5 243V226.5M343.5 243V226.0M344.5 243V225.3M345.5 243V225.5M346.5 243V227.9M347.5 243V230.9M348.5 243V229.7M349.5 243V228.1M350.5 243V229.9M351.5 243V229.3M352.5 243V230.1M353.5 243V233.4M354.5 243V232.5M355.5 243V232.0M356.5 243V231.2M357.5 243V231.3M358.5 243V230.4M359.5 243V230.7M360.5 243V229.1M361.5 243V228.8M362.5 243V228.4M363.5 243V227.4M364.5 243V227.7M365.5 243V227.3M366.5 243V227.0M367.5 243V229.4M368.5 243V227.6M369.5 243V229.2M370.5 243V230.3M371.5 243V230.1M372.5 243V230.1M373.5 243V231.9M374.5 243V232.0M375.5 243V235.3M376.5 243V232.2M377.5 243V232.1M378.5 243V232.8M379.5 243V233.9M380.5 243V232.2M381.5 243V234.3M382.5 243V233.4M383.5 243V233.5M384.5 243V233.6M385.5 243V235.5M386.5 243V232.9M387.5 243V233.7M388.5 243V234.6M389.5 243V232.4M390.5 243V234.2M391.5 243V233.2M392.5 243V234.1M393.5 243V233.2M394.5 243V234.6M395.5 243V232.9M396.5 243V233.0M397.5 243V234.1M398.5 243V232.6M399.5 243V233.9M400.5 243V232.9M401.5 243V234.3M402.5 243V234.1M403.5 243V232.9M404.5 243V234.3M405.5 243V233.8M406.5 243V233.6M407.5 243V234.1M408.5 243V232.9M409.5 243V233.3M410.5 243V235.7M411.5 243V234.5M412.5 243V233.9M413.5 243V233.0M414.5 243V234.5M415.5 243V233.3M416.5 243V233.2M417.5 243V236.1M418.5 243V234.6M419.5 243V234.0M420.5 243V233.9M421.5 243V233.5M422.5 243V234.8M423.5 243V233.3M424.5 243V235.3M425.5 243V233.6M426.5 243V233.3M427.5 243V234.6M428.5 243V234.1M429.5 243V234.9M430.5 243V234.8M431.5 243V233.5M432.5 243V233.6M433.5 243V234.3M434.5 243V234.8M435.5 243V234.3M436.5 243V233.6M437.5 243V233.2M438.5 243V233.9M439.5 243V232.7M440.5 243V232.3M441.5 243V230.8M442.5 243V230.9M443.5 243V233.4M444.5 243V230.0M445.5 243V228.6M446.5 243V227.9M447.5 243V228.5M448.5 243V228.9M449.5 243V228.3M450.5 243V228.4M451.5 243V228.7M452.5 243V228.9M453.5 243V232.2M454.5 243V230.6M455.5 243V232.2M456.5 243V230.0M457.5 243V232.3M458.5 243V230.5M459.5 243V231.8M460.5 243V230.1M461.5 243V230.5M462.5 243V233.7M463.5 243V231.1M464.5 243V233.6M465.5 243V231.5M466.5 243V235.3M467.5 243V232.7M468.5 243V233.8M469.5 243V235.7M470.5 243V235.1M471.5 243V235.3M472.5 243V237.3M473.5 243V235.6M474.5 243V235.0M475.5 243V235.6M476.5 243V237.9M477.5 243V235.2M478.5 243V236.0M479.5 243V236.3M480.5 243V236.5M481.5 243V237.2M482.5 243V237.0M483.5 243V235.9M484.5 243V237.4M485.5 243V236.1M486.5 243V236.2M487.5 243V236.0M488.5 243V237.7M489.5 243V236.5M490.5 243V236.5M491.5 243V236.5M492.5 243V236.9M493.5 243V238.4M494.5 243V237.4M495.5 243V239.1M496.5 243V238.6M497.5 243V238.5M498.5 243V237.9M499.5 243V239.1M500.5 243V238.1M501.5 243V238.7M502.5 243V238.3M503.5 243V240.3M504.5 243V238.9M505.5 243V240.1M506.5 243V239.2M507.5 243V239.2M508.5 243V238.6M509.5 243V239.2M510.5 243V239.2M511.5 243V238.4M512.5 243V238.8M513.5 243V237.8M514.5 243V239.1M515.5 243V237.5M516.5 243V237.5M517.5 243V237.7M518.5 243V237.3M519.5 243V237.1M520.5 243V237.1M521.5 243V237.2M522.5 243V238.3M523.5 243V237.6M524.5 243V237.5M525.5 243V237.4M526.5 243V236.7M527.5 243V236.8M528.5 243V236.9M529.5 243V238.7M530.5 243V237.3M531.5 243V236.6M532.5 243V236.4M533.5 243V236.8M534.5 243V236.9M535.5 243V236.8M536.5 243V237.0M537.5 243V237.6M538.5 243V237.0M539.5 243V236.8M540.5 243V237.1M541.5 243V239.0M542.5 243V237.1M543.5 243V237.2M544.5 243V237.7M545.5 243V238.3M546.5 243V238.1M547.5 243V239.0M548.5 243V239.6M549.5 243V240.4M550.5 243V239.7M551.5 243V239.7M552.5 243V239.5M553.5 243V240.0M554.5 243V240.8M555.5 243V240.6M556.5 243V239.9M557.5 243V240.6M558.5 243V240.7M559.5 243V240.6M560.5 243V239.8M561.5 243V239.9M562.5 243V240.0M563.5 243V240.1M564.5 243V240.5M565.5 243V240.1M566.5 243V240.1M567.5 243V240.4M568.5 243V240.2M569.5 243V240.8M570.5 243V240.8M571.5 243V241.2M572.5 243V241.0M573.5 243V241.2M574.5 243V241.2M575.5 243V240.2M576.5 243V240.1M577.5 243V240.8M578.5 243V240.2M579.5 243V240.4M580.5 243V240.8M581.5 243V240.4M582.5 243V240.6M583.5 243V240.0M584.5 243V240.4M585.5 243V240.7M586.5 243V239.9M587.5 243V240.8M588.5 243V240.1M589.5 243V239.9M590.5 243V240.6M591.5 243V239.8M592.5 243V240.3M593.5 243V239.8M594.5 243V239.8M595.5 243V239.8M596.5 243V240.7M597.5 243V240.6M598.5 243V239.7M599.5 243V240.9M600.5 243V240.0M601.5 243V240.8M602.5 243V239.8M603.5 243V239.9M604.5 243V239.8M605.5 243V240.3M606.5 243V240.7M607.5 243V240.9M608.5 243V240.2M609.5 243V241.0M610.5 243V239.8M611.5 243V240.4M612.5 243V240.5M613.5 243V240.0M614.5 243V241.2M615.5 243V241.1M616.5 243V239.9M617.5 243V240.0M618.5 243V241.2M619.5 243V240.7M620.5 243V240.4M621.5 243V240.0M622.5 243V240.3M623.5 243V241.2M624.5 243V241.2M625.5 243V240.5M626.5 243V240.0M627.5 243V240.3M628.5 243V240.8M629.5 243V240.1M630.5 243V240.3M631.5 243V240.6M632.5 243V240.1M633.5 243V240.0M634.5 243V240.7M635.5 243V239.7M636.5 243V240.3M637.5 243V240.5M638.5 243V240.6M639.5 243V239.4M640.5 243V239.5M641.5 243V239.7M642.5 243V240.6M643.5 243V239.9M644.5 243V239.3M645.5 243V239.7M646.5 243V239.0M647.5 243V239.2M648.5 243V238.9M649.5 243V239.7M650.5 243V238.8M651.5 243V238.9M652.5 243V238.3M653.5 243V238.8M654.5 243V239.6M655.5 243V239.3M656.5 243V238.2M657.5 243V238.6M658.5 243V237.3M659.5 243V238.4M660.5 243V239.2M661.5 243V239.7M662.5 243V238.9M663.5 243V237.3M664.5 243V237.8M665.5 243V238.3M666.5 243V237.6M667.5 243V237.8M668.5 243V238.3M669.5 243V238.1M670.5 243V239.0M671.5 243V238.5M672.5 243V238.8M673.5 243V239.1M674.5 243V238.6M675.5 243V238.4M676.5 243V240.0M677.5 243V239.9M678.5 243V239.6M679.5 243V238.7M680.5 243V239.1M681.5 243V239.2M682.5 243V239.2M683.5 243V238.5M684.5 243V239.1M685.5 243V238.1M686.5 243V238.1M687.5 243V238.2M688.5 243V239.2M689.5 243V238.3M690.5 243V238.1M691.5 243V239.6M692.5 243V237.8M693.5 243V239.2M694.5 243V237.4M695.5 243V238.9M696.5 243V237.2M697.5 243V237.3M698.5 243V239.4M699.5 243V237.9M700.5 243V236.5M701.5 243V236.4M702.5 243V236.5M703.5 243V237.7M704.5 243V236.3M705.5 243V236.0M706.5 243V237.1M707.5 243V238.1M708.5 243V235.8M709.5 243V236.8M710.5 243V236.2M711.5 243V237.9M712.5 243V236.1M713.5 243V236.2M714.5 243V236.8M715.5 243V236.1M716.5 243V236.7M717.5 243V235.2M718.5 243V235.3M719.5 243V237.3M720.5 243V235.3M721.5 243V236.6M722.5 243V235.0M723.5 243V237.1M724.5 243V236.1M725.5 243V234.9M726.5 243V235.6M727.5 243V235.3M728.5 243V235.1M729.5 243V235.9M730.5 243V235.6M731.5 243V236.0M732.5 243V237.1M733.5 243V235.2M734.5 243V236.0M735.5 243V235.2M736.5 243V238.1M737.5 243V235.5M738.5 243V236.5M739.5 243V235.6M740.5 243V236.6M741.5 243V235.5M742.5 243V235.1M743.5 243V235.7M744.5 243V234.7M745.5 243V236.3M746.5 243V234.8M747.5 243V235.6M748.5 243V235.4M749.5 243V233.9M750.5 243V234.4M751.5 243V233.9M752.5 243V233.6M753.5 243V235.8M754.5 243V233.7M755.5 243V234.9M756.5 243V235.3M757.5 243V236.6M758.5 243V234.2M759.5 243V235.5M760.5 243V233.8M761.5 243V234.3M762.5 243V234.5M763.5 243V234.5M764.5 243V234.2M765.5 243V234.2M766.5 243V235.1M767.5 243V235.1M768.5 243V236.2M769.5 243V234.6M770.5 243V237.2M771.5 243V234.8M772.5 243V234.0M773.5 243V234.3M774.5 243V234.0M775.5 243V234.5M776.5 243V235.6M777.5 243V236.6M778.5 243V236.5M779.5 243V233.8M780.5 243V234.3M781.5 243V233.9M782.5 243V236.1M783.5 243V237.1M784.5 243V235.5M785.5 243V235.0M786.5 243V235.6M787.5 243V235.6M788.5 243V236.5M789.5 243V236.9M790.5 243V236.3M791.5 243V236.3M792.5 243V237.2M793.5 243V236.2M794.5 243V236.4M795.5 243V236.9M796.5 243V238.9M797.5 243V236.3M798.5 243V236.6M799.5 243V236.4M800.5 243V237.7M801.5 243V236.9M802.5 243V236.7M803.5 243V237.1M804.5 243V236.6M805.5 243V238.3M806.5 243V236.3M807.5 243V238.7M808.5 243V238.0M809.5 243V238.5M810.5 243V236.6M811.5 243V238.5M812.5 243V236.8M813.5 243V237.3M814.5 243V238.0M815.5 243V237.1M816.5 243V236.8M817.5 243V236.8M818.5 243V236.3M819.5 243V237.2M820.5 243V236.2M821.5 243V238.1M822.5 243V238.7M823.5 243V236.0M824.5 243V236.8M825.5 243V235.8M826.5 243V236.1M827.5 243V236.0M828.5 243V237.7M829.5 243V235.6M830.5 243V235.7M831.5 243V236.1M832.5 243V235.4M833.5 243V235.3M834.5 243V235.2M835.5 243V236.9M836.5 243V234.7M837.5 243V235.2M838.5 243V235.8M839.5 243V234.2M840.5 243V235.6M841.5 243V236.4M842.5 243V234.3M843.5 243V234.1M844.5 243V234.1M845.5 243V233.4M846.5 243V233.5M847.5 243V236.9M848.5 243V233.7M849.5 243V233.9M850.5 243V235.9M851.5 243V234.4M852.5 243V235.3M853.5 243V234.9M854.5 243V234.8M855.5 243V236.2M856.5 243V236.0M857.5 243V236.9M858.5 243V235.5M859.5 243V235.7M860.5 243V236.9M861.5 243V236.8M862.5 243V238.7M863.5 243V237.2M864.5 243V237.3M865.5 243V237.0M866.5 243V237.7M867.5 243V236.8M868.5 243V238.3M869.5 243V237.3M870.5 243V237.4M871.5 243V237.4M872.5 243V236.2M873.5 243V236.3M874.5 243V236.0M875.5 243V238.1M876.5 243V236.2M877.5 243V236.2M878.5 243V238.1M879.5 243V236.7M880.5 243V235.9M881.5 243V235.4M882.5 243V236.2M883.5 243V234.9M884.5 243V234.6M885.5 243V234.1M886.5 243V236.1M887.5 243V235.8M888.5 243V233.9M889.5 243V235.4M890.5 243V235.2M891.5 243V233.4M892.5 243V234.4M893.5 243V232.6M894.5 243V232.6M895.5 243V232.8M896.5 243V236.5M897.5 243V233.1M898.5 243V233.9M899.5 243V233.2M900.5 243V234.1M901.5 243V233.2M902.5 243V234.8M903.5 243V232.1M904.5 243V232.7M905.5 243V232.1M906.5 243V232.4M907.5 243V232.6M908.5 243V232.9M909.5 243V232.8M910.5 243V233.8M911.5 243V233.6M912.5 243V233.7M913.5 243V236.8M914.5 243V235.9M915.5 243V236.2M916.5 243V235.4M917.5 243V237.1M918.5 243V235.5M919.5 243V237.6M920.5 243V237.8M921.5 243V237.1M922.5 243V237.4M923.5 243V238.1M924.5 243V238.7M925.5 243V237.4M926.5 243V238.4M927.5 243V236.6M928.5 243V238.3M929.5 243V238.6M930.5 243V238.9M931.5 243V236.6M932.5 243V236.6M933.5 243V237.2M934.5 243V236.1M935.5 243V236.4M936.5 243V236.5M937.5 243V236.0M938.5 243V236.1M939.5 243V236.0M940.5 243V235.9M941.5 243V236.4M942.5 243V238.3M943.5 243V236.5M944.5 243V236.0M945.5 243V236.2M946.5 243V236.4M947.5 243V236.1M948.5 243V236.7M949.5 243V236.3M950.5 243V237.0M951.5 243V237.0M952.5 243V237.4M953.5 243V236.6M954.5 243V236.8M955.5 243V236.4M956.5 243V238.0M957.5 243V238.0M958.5 243V236.7M959.5 243V237.3M960.5 243V236.8M961.5 243V237.3M962.5 243V237.2M963.5 243V237.8M964.5 243V238.4M965.5 243V237.9M966.5 243V237.7M967.5 243V237.9M968.5 243V238.0M969.5 243V237.7M970.5 243V238.2M971.5 243V238.9M972.5 243V238.3M973.5 243V238.8M974.5 243V238.5M975.5 243V238.4M976.5 243V240.0M977.5 243V238.7M978.5 243V238.9M979.5 243V238.7M980.5 243V239.2M981.5 243V240.2M982.5 243V239.3M983.5 243V239.3M984.5 243V239.4M985.5 243V239.5M986.5 243V239.7M987.5 243V239.9M988.5 243V240.3M989.5 243V240.2M990.5 243V239.3M991.5 243V240.2M992.5 243V239.5M993.5 243V239.2M994.5 243V239.7M995.5 243V239.3M996.5 243V239.4M997.5 243V239.8M998.5 243V239.8M999.5 243V239.9M1000.5 243V239.4M1001.5 243V239.5M1002.5 243V239.5M1003.5 243V239.0M1004.5 243V239.3M1005.5 243V239.7M1006.5 243V238.9M1007.5 243V239.3M1008.5 243V239.2M1009.5 243V239.8M1010.5 243V241.2M1011.5 243V240.0M1012.5 243V239.8M1013.5 243V238.9M1014.5 243V240.5M1015.5 243V239.2M1016.5 243V240.0M1017.5 243V241.1M1018.5 243V239.7M1019.5 243V240.7M1020.5 243V239.4M1021.5 243V239.7M1022.5 243V239.3M1023.5 243V239.4M1024.5 243V239.8M1025.5 243V239.6M1026.5 243V240.6M1027.5 243V240.7M1028.5 243V241.2M1029.5 243V239.7M1030.5 243V241.0M1031.5 243V240.5M1032.5 243V240.1M1033.5 243V239.9M1034.5 243V240.6M1035.5 243V239.9M1036.5 243V240.6M1037.5 243V240.2M1038.5 243V240.4M1039.5 243V240.0M1040.5 243V241.1M1041.5 243V240.1M1042.5 243V240.2M1043.5 243V240.2M1044.5 243V240.1M1045.5 243V240.6M1046.5 243V240.6M1047.5 243V240.8M1048.5 243V241.2M1049.5 243V241.2M1050.5 243V241.2M1051.5 243V241.2M1052.5 243V241.2M1053.5 243V240.7M1054.5 243V240.6M1055.5 243V240.4M1056.5 243V241.1M1057.5 243V240.6M1058.5 243V240.6M1059.5 243V240.7M1060.5 243V240.6M1061.5 243V241.2M1062.5 243V241.0M1063.5 243V240.9M1064.5 243V240.9M1065.5 243V240.7M1066.5 243V241.2M1067.5 243V240.8M1068.5 243V240.7M1069.5 243V241.2M1070.5 243V241.2M1071.5 243V240.8M1072.5 243V241.2M1073.5 243V241.2M1074.5 243V241.2M1075.5 243V241.2M1076.5 243V241.2" stroke="#00ff00" stroke-width="1" fill="none" shape-rendering="crispEdges"/><line x1="163.5" y1="21.5" x2="163.5" y2="242.5" stroke="#d8c000" stroke-dasharray="3 2"/><line x1="311.5" y1="21.5" x2="311.5" y2="242.5" stroke="#8c7e10" stroke-dasharray="3 2"/><line x1="458.5" y1="21.5" x2="458.5" y2="242.5" stroke="#8c7e10" stroke-dasharray="3 2"/><line x1="753.5" y1="21.5" x2="753.5" y2="242.5" stroke="#d0b800" stroke-dasharray="3 2"/><line x1="901.5" y1="21.5" x2="901.5" y2="242.5" stroke="#d8c000" stroke-dasharray="3 2"/><line x1="1048.5" y1="21.5" x2="1048.5" y2="242.5" stroke="#c8b400" stroke-dasharray="3 2"/><line x1="606.5" y1="21.5" x2="606.5" y2="242.5" stroke="#d01010" stroke-dasharray="3 2"/><path d="M53.5 244V21.5H1077.5V243" stroke="#9a9a9a" fill="none"/><line x1="53.5" y1="243.5" x2="1077.5" y2="243.5" stroke="#5a5a5a"/><line x1="51" y1="242.5" x2="53.5" y2="242.5" stroke="#8a96b4"/><line x1="51" y1="222.5" x2="53.5" y2="222.5" stroke="#8a96b4"/><line x1="51" y1="201.5" x2="53.5" y2="201.5" stroke="#8a96b4"/><line x1="51" y1="181.5" x2="53.5" y2="181.5" stroke="#8a96b4"/><line x1="51" y1="160.5" x2="53.5" y2="160.5" stroke="#8a96b4"/><line x1="51" y1="139.5" x2="53.5" y2="139.5" stroke="#8a96b4"/><line x1="51" y1="119.5" x2="53.5" y2="119.5" stroke="#8a96b4"/><line x1="51" y1="98.5" x2="53.5" y2="98.5" stroke="#8a96b4"/><line x1="51" y1="77.5" x2="53.5" y2="77.5" stroke="#8a96b4"/><line x1="51" y1="57.5" x2="53.5" y2="57.5" stroke="#8a96b4"/><line x1="51" y1="36.5" x2="53.5" y2="36.5" stroke="#8a96b4"/><line x1="51" y1="21.5" x2="53.5" y2="21.5" stroke="#8a96b4"/><line x1="53.5" y1="243" x2="53.5" y2="248" stroke="#808080"/><line x1="104.5" y1="243" x2="104.5" y2="248" stroke="#808080"/><line x1="155.5" y1="243" x2="155.5" y2="248" stroke="#808080"/><line x1="206.5" y1="243" x2="206.5" y2="248" stroke="#808080"/><line x1="258.5" y1="243" x2="258.5" y2="248" stroke="#808080"/><line x1="309.5" y1="243" x2="309.5" y2="248" stroke="#808080"/><line x1="360.5" y1="243" x2="360.5" y2="248" stroke="#808080"/><line x1="411.5" y1="243" x2="411.5" y2="248" stroke="#808080"/><line x1="462.5" y1="243" x2="462.5" y2="248" stroke="#808080"/><line x1="513.5" y1="243" x2="513.5" y2="248" stroke="#808080"/><line x1="565.5" y1="243" x2="565.5" y2="248" stroke="#808080"/><line x1="616.5" y1="243" x2="616.5" y2="248" stroke="#808080"/><line x1="667.5" y1="243" x2="667.5" y2="248" stroke="#808080"/><line x1="718.5" y1="243" x2="718.5" y2="248" stroke="#808080"/><line x1="769.5" y1="243" x2="769.5" y2="248" stroke="#808080"/><line x1="820.5" y1="243" x2="820.5" y2="248" stroke="#808080"/><line x1="872.5" y1="243" x2="872.5" y2="248" stroke="#808080"/><line x1="923.5" y1="243" x2="923.5" y2="248" stroke="#808080"/><line x1="974.5" y1="243" x2="974.5" y2="248" stroke="#808080"/><line x1="1025.5" y1="243" x2="1025.5" y2="248" stroke="#808080"/><line x1="571" y1="233" x2="605.5" y2="238.8" stroke="#c8c8c8" stroke-width="0.8"/><circle cx="606" cy="239" r="1.3" fill="#ff2020"/><circle cx="458" cy="240" r="1.2" fill="#ff4020"/><circle cx="753" cy="239.5" r="1.2" fill="#ff4020"/>
<line x1="53.5" y1="475.5" x2="1077.5" y2="475.5" stroke="#4a4a4a" stroke-dasharray="2 1"/><line x1="53.5" y1="448.5" x2="1077.5" y2="448.5" stroke="#4a4a4a" stroke-dasharray="2 1"/><line x1="53.5" y1="421.5" x2="1077.5" y2="421.5" stroke="#4a4a4a" stroke-dasharray="2 1"/><line x1="53.5" y1="394.5" x2="1077.5" y2="394.5" stroke="#4a4a4a" stroke-dasharray="2 1"/><line x1="53.5" y1="367.5" x2="1077.5" y2="367.5" stroke="#4a4a4a" stroke-dasharray="2 1"/><line x1="53.5" y1="341.5" x2="1077.5" y2="341.5" stroke="#4a4a4a" stroke-dasharray="2 1"/><line x1="53.5" y1="314.5" x2="1077.5" y2="314.5" stroke="#4a4a4a" stroke-dasharray="2 1"/><line x1="53.5" y1="287.5" x2="1077.5" y2="287.5" stroke="#4a4a4a" stroke-dasharray="2 1"/><line x1="55.5" y1="281.5" x2="55.5" y2="502.7" stroke="#4a4a4a" stroke-dasharray="2 1"/><line x1="114.5" y1="281.5" x2="114.5" y2="502.7" stroke="#4a4a4a" stroke-dasharray="2 1"/><line x1="174.5" y1="281.5" x2="174.5" y2="502.7" stroke="#4a4a4a" stroke-dasharray="2 1"/><line x1="233.5" y1="281.5" x2="233.5" y2="502.7" stroke="#4a4a4a" stroke-dasharray="2 1"/><line x1="292.5" y1="281.5" x2="292.5" y2="502.7" stroke="#4a4a4a" stroke-dasharray="2 1"/><line x1="351.5" y1="281.5" x2="351.5" y2="502.7" stroke="#4a4a4a" stroke-dasharray="2 1"/><line x1="411.5" y1="281.5" x2="411.5" y2="502.7" stroke="#4a4a4a" stroke-dasharray="2 1"/><line x1="470.5" y1="281.5" x2="470.5" y2="502.7" stroke="#4a4a4a" stroke-dasharray="2 1"/><line x1="529.5" y1="281.5" x2="529.5" y2="502.7" stroke="#4a4a4a" stroke-dasharray="2 1"/><line x1="588.5" y1="281.5" x2="588.5" y2="502.7" stroke="#4a4a4a" stroke-dasharray="2 1"/><line x1="648.5" y1="281.5" x2="648.5" y2="502.7" stroke="#4a4a4a" stroke-dasharray="2 1"/><line x1="707.5" y1="281.5" x2="707.5" y2="502.7" stroke="#4a4a4a" stroke-dasharray="2 1"/><line x1="766.5" y1="281.5" x2="766.5" y2="502.7" stroke="#4a4a4a" stroke-dasharray="2 1"/><line x1="825.5" y1="281.5" x2="825.5" y2="502.7" stroke="#4a4a4a" stroke-dasharray="2 1"/><line x1="885.5" y1="281.5" x2="885.5" y2="502.7" stroke="#4a4a4a" stroke-dasharray="2 1"/><line x1="944.5" y1="281.5" x2="944.5" y2="502.7" stroke="#4a4a4a" stroke-dasharray="2 1"/><line x1="1003.5" y1="281.5" x2="1003.5" y2="502.7" stroke="#4a4a4a" stroke-dasharray="2 1"/><line x1="1062.5" y1="281.5" x2="1062.5" y2="502.7" stroke="#4a4a4a" stroke-dasharray="2 1"/><path d="M55.5 500.7V483.4M56.0 498.9V483.4M56.5 498.5V484.1M57.0 496.4V481.7M57.5 497.5V478.0M58.0 499.4V482.9M58.5 496.4V488.2M59.0 497.1V490.8M59.5 497.1V485.7M60.0 495.2V486.4M60.5 501.4V487.2M61.0 502.4V488.3M61.5 500.3V490.8M62.0 498.7V484.4M62.5 496.8V480.6M63.0 501.2V485.9M63.5 494.8V483.0M64.0 498.7V484.3M64.5 497.7V477.6M65.0 498.7V485.2M65.5 497.2V479.7M66.0 498.7V480.5M66.5 498.7V485.2M67.0 501.1V481.4M67.5 500.6V481.4M68.0 500.6V472.0M68.5 498.0V489.1M69.0 498.2V484.2M69.5 500.4V487.9M70.0 500.4V486.8M70.5 498.1V487.4M71.0 498.9V487.4M71.5 501.2V481.9M72.0 496.0V485.3M72.5 497.8V486.0M73.0 498.7V482.3M73.5 498.4V481.6M74.0 498.2V490.4M74.5 497.0V483.5M75.0 493.9V478.5M75.5 497.2V484.4M76.0 502.1V486.4M76.5 498.4V484.5M77.0 500.0V488.0M77.5 498.3V478.4M78.0 498.3V477.3M78.5 498.5V488.6M79.0 498.1V485.6M79.5 498.5V487.1M80.0 498.9V482.3M80.5 498.7V484.8M81.0 497.8V484.6M81.5 495.0V484.6M82.0 500.2V484.5M82.5 499.9V483.1M83.0 497.7V487.7M83.5 496.3V480.5M84.0 497.7V480.5M84.5 499.2V486.9M85.0 499.2V478.9M85.5 500.8V486.0M86.0 495.5V489.4M86.5 497.3V484.8M87.0 498.5V483.6M87.5 498.6V470.8M88.0 500.7V480.1M88.5 498.8V480.8M89.0 499.3V482.8M89.5 499.3V478.1M90.0 498.9V491.9M90.5 501.8V484.7M91.0 499.3V478.2M91.5 497.1V483.2M92.0 494.3V488.3M92.5 496.5V484.2M93.0 499.5V485.2M93.5 499.4V489.8M94.0 496.1V484.7M94.5 500.3V476.2M95.0 500.4V483.1M95.5 501.0V478.7M96.0 501.0V486.4M96.5 502.2V477.1M97.0 502.2V492.2M97.5 496.5V484.6M98.0 498.8V488.8M98.5 499.7V482.6M99.0 502.4V483.7M99.5 502.1V490.0M100.0 498.5V486.2M100.5 498.3V486.7M101.0 499.4V483.9M101.5 498.7V482.4M102.0 497.4V485.5M102.5 498.9V490.1M103.0 497.8V487.8M103.5 496.7V477.1M104.0 495.9V470.8M104.5 500.7V487.6M105.0 501.0V479.8M105.5 498.1V487.3M106.0 494.9V480.5M106.5 498.4V480.5M107.0 498.4V487.3M107.5 499.9V485.1M108.0 498.6V483.2M108.5 498.6V486.4M109.0 499.4V480.1M109.5 501.4V483.2M110.0 499.0V493.3M110.5 500.4V489.5M111.0 500.4V480.0M111.5 501.5V485.4M112.0 501.8V487.4M112.5 499.2V480.5M113.0 499.2V477.3M113.5 496.6V491.1M114.0 496.2V484.2M114.5 498.7V489.7M115.0 494.7V483.2M115.5 500.6V483.2M116.0 498.3V485.5M116.5 501.6V485.5M117.0 500.1V487.1M117.5 499.2V482.5M118.0 496.5V488.0M118.5 500.0V479.8M119.0 499.5V485.9M119.5 494.7V474.3M120.0 495.9V486.3M120.5 499.4V487.2M121.0 499.3V484.2M121.5 499.5V481.2M122.0 501.6V481.2M122.5 499.6V484.4M123.0 494.9V481.9M123.5 499.7V481.7M124.0 498.0V481.2M124.5 496.1V482.7M125.0 500.3V481.5M125.5 495.8V493.8M126.0 499.1V490.3M126.5 497.3V489.8M127.0 499.0V485.6M127.5 500.8V480.8M128.0 497.9V479.4M128.5 495.1V479.4M129.0 499.2V485.2M129.5 500.2V486.9M130.0 501.1V482.8M130.5 501.3V482.8M131.0 497.6V489.2M131.5 495.6V481.8M132.0 500.5V486.4M132.5 498.1V485.1M133.0 498.6V481.9M133.5 498.8V481.9M134.0 498.8V485.6M134.5 496.9V480.9M135.0 500.2V491.2M135.5 500.2V487.2M136.0 499.0V488.2M136.5 495.3V478.0M137.0 501.7V488.8M137.5 500.4V480.7M138.0 499.1V480.7M138.5 501.2V491.4M139.0 499.4V488.8M139.5 499.4V483.0M140.0 499.5V485.9M140.5 496.8V475.4M141.0 496.9V484.4M141.5 499.3V483.1M142.0 499.3V481.4M142.5 499.3V487.8M143.0 500.1V487.6M143.5 498.1V479.6M144.0 498.7V476.9M144.5 497.3V489.7M145.0 498.3V479.2M145.5 501.2V486.2M146.0 501.2V481.6M146.5 500.2V490.2M147.0 500.1V485.1M147.5 501.9V485.6M148.0 501.9V488.9M148.5 497.7V481.4M149.0 501.7V483.9M149.5 496.3V485.4M150.0 500.0V490.4M150.5 499.3V488.7M151.0 499.3V483.7M151.5 498.8V483.7M152.0 500.2V488.3M152.5 500.5V486.6M153.0 495.4V485.1M153.5 497.6V485.0M154.0 499.0V474.5M154.5 499.4V484.2M155.0 499.3V484.9M155.5 498.2V481.9M156.0 500.6V490.0M156.5 500.1V481.3M157.0 500.1V488.6M157.5 501.0V489.0M158.0 500.5V482.2M158.5 499.0V481.3M159.0 499.4V491.9M159.5 493.9V484.8M160.0 494.8V478.8M160.5 497.4V478.8M161.0 501.4V483.6M161.5 498.5V475.8M162.0 501.3V483.3M162.5 501.3V483.4M163.0 500.2V480.0M163.5 496.3V479.5M164.0 500.0V490.2M164.5 495.1V480.0M165.0 499.3V483.7M165.5 496.2V483.7M166.0 501.6V475.4M166.5 496.0V484.2M167.0 502.0V486.2M167.5 499.5V481.3M168.0 494.4V480.9M168.5 494.5V484.6M169.0 500.7V479.5M169.5 496.4V479.3M170.0 496.7V479.3M170.5 501.8V491.0M171.0 501.8V482.4M171.5 500.8V479.7M172.0 499.6V485.3M172.5 502.1V472.8M173.0 500.9V474.7M173.5 494.7V482.0M174.0 502.5V487.7M174.5 502.5V488.3M175.0 494.9V484.8M175.5 499.7V485.6M176.0 499.7V479.3M176.5 496.9V474.7M177.0 501.9V487.0M177.5 501.9V477.6M178.0 502.0V485.8M178.5 500.6V485.8M179.0 494.2V480.8M179.5 501.5V486.7M180.0 501.5V491.8M180.5 499.9V483.7M181.0 498.2V484.5M181.5 497.0V481.3M182.0 498.6V481.3M182.5 498.6V482.3M183.0 500.1V487.8M183.5 498.5V479.1M184.0 495.4V487.4M184.5 497.8V484.3M185.0 501.4V487.5M185.5 499.9V481.2M186.0 499.9V484.6M186.5 500.6V480.2M187.0 500.1V480.5M187.5 500.9V479.0M188.0 499.0V475.5M188.5 495.4V486.2M189.0 499.0V482.7M189.5 496.9V483.1M190.0 498.6V483.1M190.5 500.2V473.2M191.0 499.3V479.2M191.5 498.9V479.2M192.0 500.0V491.2M192.5 502.1V486.8M193.0 502.1V473.3M193.5 499.9V485.0M194.0 500.8V485.0M194.5 494.1V486.9M195.0 496.2V482.6M195.5 498.1V482.6M196.0 501.0V486.6M196.5 496.0V478.2M197.0 498.9V490.4M197.5 501.4V485.9M198.0 501.5V485.7M198.5 501.5V492.2M199.0 499.7V491.2M199.5 499.7V484.5M200.0 497.4V484.5M200.5 500.6V485.7M201.0 502.1V486.1M201.5 499.3V490.5M202.0 498.9V485.5M202.5 498.9V486.5M203.0 495.3V490.1M203.5 497.6V490.1M204.0 498.2V477.2M204.5 493.0V482.2M205.0 494.4V487.9M205.5 502.4V491.7M206.0 501.4V487.8M206.5 496.9V488.1M207.0 501.5V487.2M207.5 501.2V489.1M208.0 498.0V482.8M208.5 498.1V489.6M209.0 500.2V487.4M209.5 500.2V482.6M210.0 497.0V487.3M210.5 497.9V483.2M211.0 499.7V478.5M211.5 498.8V485.3M212.0 495.7V485.3M212.5 499.7V488.7M213.0 498.1V477.6M213.5 494.2V478.6M214.0 496.6V487.1M214.5 497.6V489.5M215.0 498.2V489.4M215.5 497.0V484.0M216.0 498.1V489.5M216.5 501.2V483.7M217.0 501.2V484.6M217.5 497.2V484.6M218.0 498.0V488.6M218.5 496.3V484.2M219.0 498.2V484.2M219.5 498.9V488.4M220.0 498.6V484.5M220.5 498.1V484.5M221.0 501.1V483.1M221.5 498.3V486.8M222.0 500.2V482.4M222.5 496.0V482.4M223.0 502.3V487.7M223.5 499.9V481.0M224.0 496.2V482.5M224.5 502.3V482.5M225.0 497.8V481.9M225.5 502.1V481.9M226.0 497.4V481.0M226.5 499.1V488.4M227.0 495.5V482.7M227.5 499.0V491.7M228.0 499.2V487.8M228.5 500.4V488.3M229.0 500.6V484.0M229.5 501.9V480.8M230.0 502.1V485.7M230.5 494.3V484.1M231.0 495.8V473.4M231.5 498.9V490.0M232.0 500.0V484.3M232.5 499.3V488.9M233.0 498.4V484.4M233.5 499.9V486.3M234.0 495.9V483.1M234.5 495.2V481.3M235.0 497.9V485.0M235.5 498.5V488.3M236.0 501.5V488.1M236.5 499.3V488.6M237.0 499.2V481.7M237.5 496.3V488.2M238.0 495.8V479.2M238.5 496.2V479.2M239.0 496.2V481.7M239.5 497.5V491.0M240.0 497.2V491.8M240.5 498.1V478.7M241.0 499.4V478.7M241.5 498.3V484.9M242.0 498.7V479.9M242.5 501.7V486.7M243.0 501.7V485.1M243.5 499.3V481.2M244.0 498.0V488.0M244.5 495.7V484.1M245.0 499.6V480.2M245.5 496.7V480.2M246.0 500.3V490.8M246.5 496.1V484.5M247.0 496.1V487.2M247.5 500.0V492.5M248.0 499.4V482.2M248.5 499.2V489.0M249.0 499.2V486.4M249.5 498.2V484.7M250.0 499.6V486.8M250.5 497.0V487.1M251.0 501.7V479.6M251.5 495.0V477.3M252.0 498.4V477.3M252.5 501.3V488.1M253.0 498.0V476.4M253.5 497.8V486.6M254.0 501.6V487.4M254.5 498.7V487.9M255.0 499.5V491.0M255.5 499.5V483.2M256.0 495.5V486.8M256.5 500.9V486.0M257.0 499.9V487.2M257.5 500.5V478.7M258.0 497.7V485.3M258.5 494.8V481.6M259.0 493.1V483.4M259.5 498.6V487.4M260.0 500.8V489.6M260.5 500.2V489.6M261.0 498.3V479.4M261.5 497.6V488.6M262.0 500.7V482.9M262.5 501.4V485.6M263.0 497.5V483.9M263.5 497.8V485.1M264.0 501.9V488.6M264.5 501.9V486.9M265.0 499.3V487.6M265.5 500.9V486.8M266.0 500.5V490.2M266.5 498.4V488.2M267.0 496.0V488.9M267.5 499.1V488.9M268.0 497.8V475.3M268.5 497.8V487.7M269.0 497.9V486.8M269.5 500.0V492.1M270.0 498.5V490.1M270.5 498.6V491.4M271.0 496.9V480.4M271.5 498.1V485.9M272.0 495.4V486.1M272.5 500.1V490.2M273.0 499.9V483.6M273.5 498.6V485.5M274.0 500.1V488.4M274.5 500.2V488.4M275.0 497.7V484.6M275.5 499.3V491.1M276.0 498.1V490.9M276.5 499.0V489.7M277.0 500.4V486.1M277.5 500.4V482.9M278.0 501.1V476.8M278.5 501.1V484.3M279.0 495.4V488.3M279.5 501.8V479.5M280.0 499.5V479.5M280.5 499.1V487.0M281.0 498.3V485.2M281.5 501.3V483.0M282.0 494.5V486.0M282.5 497.3V488.9M283.0 501.6V484.7M283.5 500.2V483.4M284.0 498.2V479.2M284.5 499.7V480.7M285.0 502.0V480.7M285.5 502.0V481.9M286.0 498.0V478.9M286.5 498.5V478.9M287.0 496.7V488.6M287.5 497.6V475.3M288.0 501.5V485.9M288.5 500.1V485.9M289.0 501.4V488.3M289.5 501.4V488.7M290.0 500.2V490.4M290.5 498.7V481.7M291.0 498.1V483.4M291.5 501.2V482.7M292.0 500.6V482.7M292.5 497.4V484.4M293.0 497.4V481.8M293.5 499.9V487.7M294.0 499.6V485.8M294.5 500.6V493.1M295.0 500.2V491.7M295.5 502.1V488.6M296.0 497.1V484.1M296.5 498.6V484.1M297.0 499.0V485.6M297.5 499.1V477.9M298.0 500.8V488.3M298.5 495.0V479.0M299.0 499.6V493.0M299.5 499.7V485.3M300.0 499.6V488.5M300.5 498.6V486.1M301.0 499.3V489.6M301.5 497.2V489.0M302.0 500.8V492.3M302.5 500.1V485.4M303.0 497.7V484.6M303.5 496.3V491.4M304.0 495.3V486.8M304.5 498.6V477.1M305.0 499.9V475.1M305.5 499.9V480.2M306.0 495.4V484.7M306.5 498.2V488.3M307.0 498.6V482.1M307.5 499.7V487.1M308.0 499.7V482.8M308.5 499.6V481.7M309.0 499.5V489.8M309.5 498.4V479.5M310.0 500.1V486.0M310.5 495.8V483.6M311.0 498.7V486.2M311.5 498.8V483.7M312.0 497.5V478.3M312.5 499.1V478.3M313.0 501.4V487.0M313.5 498.8V484.5M314.0 500.2V490.5M314.5 499.0V476.3M315.0 499.8V479.5M315.5 498.3V486.9M316.0 499.3V488.6M316.5 495.9V489.9M317.0 500.5V489.9M317.5 496.8V490.6M318.0 500.1V477.8M318.5 500.1V485.4M319.0 497.6V485.0M319.5 496.6V490.0M320.0 497.0V483.9M320.5 501.2V487.5M321.0 500.5V487.5M321.5 499.2V487.7M322.0 498.5V482.6M322.5 501.2V482.8M323.0 499.1V479.7M323.5 499.9V474.4M324.0 498.5V478.8M324.5 501.4V484.3M325.0 501.6V486.7M325.5 497.5V485.8M326.0 497.6V484.9M326.5 500.1V492.0M327.0 500.6V481.9M327.5 495.6V487.9M328.0 500.7V486.7M328.5 498.7V489.0M329.0 500.6V478.6M329.5 497.7V477.6M330.0 502.3V487.3M330.5 495.1V487.3M331.0 500.4V488.1M331.5 500.2V488.0M332.0 499.9V486.5M332.5 500.3V485.7M333.0 501.7V480.9M333.5 498.4V485.8M334.0 501.0V484.9M334.5 500.3V491.5M335.0 496.4V490.3M335.5 498.2V489.7M336.0 497.2V485.9M336.5 500.3V487.8M337.0 501.4V486.8M337.5 501.4V490.9M338.0 500.1V490.9M338.5 501.0V489.0M339.0 497.6V484.4M339.5 496.6V489.0M340.0 498.3V487.1M340.5 501.9V490.1M341.0 496.5V489.3M341.5 500.1V487.5M342.0 497.1V486.5M342.5 501.0V488.6M343.0 497.8V489.3M343.5 497.9V486.5M344.0 497.4V490.3M344.5 498.3V487.8M345.0 499.5V484.5M345.5 497.8V483.5M346.0 499.5V489.3M346.5 499.5V486.9M347.0 497.6V485.0M347.5 497.1V488.7M348.0 498.6V486.7M348.5 500.8V483.8M349.0 500.5V484.4M349.5 498.5V487.4M350.0 499.7V486.9M350.5 499.7V484.5M351.0 499.6V486.3M351.5 497.9V490.4M352.0 498.5V488.3M352.5 499.0V485.9M353.0 497.3V481.8M353.5 500.2V487.4M354.0 497.2V487.1M354.5 496.9V484.6M355.0 500.7V478.9M355.5 497.9V487.4M356.0 497.9V481.7M356.5 497.7V485.2M357.0 501.3V483.1M357.5 502.0V486.0M358.0 498.9V485.3M358.5 501.7V489.2M359.0 501.7V494.5M359.5 501.6V491.7M360.0 499.6V489.5M360.5 495.2V477.4M361.0 499.4V491.1M361.5 500.6V490.8M362.0 500.6V488.5M362.5 500.8V482.6M363.0 495.8V483.6M363.5 500.8V486.4M364.0 497.8V486.4M364.5 499.7V488.8M365.0 499.7V488.2M365.5 496.8V488.4M366.0 497.5V487.1M366.5 500.8V486.0M367.0 500.1V487.9M367.5 501.4V487.3M368.0 497.0V489.6M368.5 499.5V491.1M369.0 499.5V487.4M369.5 500.1V488.4M370.0 500.7V482.2M370.5 501.0V482.8M371.0 502.2V489.6M371.5 497.7V486.3M372.0 497.6V485.8M372.5 497.8V483.5M373.0 500.9V490.3M373.5 499.8V490.3M374.0 500.9V488.5M374.5 497.0V487.7M375.0 497.8V488.1M375.5 498.6V484.6M376.0 498.4V492.9M376.5 497.2V486.7M377.0 496.8V484.5M377.5 496.5V487.2M378.0 501.5V491.5M378.5 500.2V490.9M379.0 501.1V491.4M379.5 501.1V483.7M380.0 496.8V487.5M380.5 500.4V484.1M381.0 496.5V484.1M381.5 499.1V488.4M382.0 500.9V485.2M382.5 501.4V488.7M383.0 497.9V478.1M383.5 497.9V488.6M384.0 497.7V488.2M384.5 499.7V488.9M385.0 498.9V492.8M385.5 500.1V485.9M386.0 499.1V486.7M386.5 502.4V489.8M387.0 496.1V487.2M387.5 498.5V488.2M388.0 501.6V489.0M388.5 497.6V490.1M389.0 501.0V490.1M389.5 491.5V481.3M390.0 497.3V491.5M390.5 499.6V479.5M391.0 500.8V488.3M391.5 501.4V488.3M392.0 494.0V475.5M392.5 496.9V487.1M393.0 500.3V486.3M393.5 500.3V495.3M394.0 496.3V487.1M394.5 501.8V483.5M395.0 501.2V489.1M395.5 501.6V491.1M396.0 498.0V484.6M396.5 498.3V486.0M397.0 499.9V493.0M397.5 498.2V484.3M398.0 501.3V484.3M398.5 498.1V491.0M399.0 500.2V490.8M399.5 500.1V488.0M400.0 500.1V492.4M400.5 500.9V473.9M401.0 500.6V491.7M401.5 500.3V489.8M402.0 500.0V490.1M402.5 500.0V493.2M403.0 498.3V487.5M403.5 501.4V489.5M404.0 498.9V488.3M404.5 499.3V483.4M405.0 498.2V488.2M405.5 497.7V487.7M406.0 502.0V491.6M406.5 502.0V489.6M407.0 497.5V488.4M407.5 498.2V485.8M408.0 498.7V486.0M408.5 496.3V490.1M409.0 496.2V485.7M409.5 497.9V490.9M410.0 497.9V492.2M410.5 496.2V482.7M411.0 502.2V492.3M411.5 498.5V489.3M412.0 496.4V492.1M412.5 496.2V488.8M413.0 498.5V488.6M413.5 498.8V490.7M414.0 499.1V486.5M414.5 501.3V487.9M415.0 499.5V483.0M415.5 500.3V490.1M416.0 500.8V486.5M416.5 498.6V487.0M417.0 498.6V486.8M417.5 502.3V485.6M418.0 500.2V490.7M418.5 501.5V492.2M419.0 501.5V485.0M419.5 500.6V492.5M420.0 497.1V483.5M420.5 499.6V492.8M421.0 499.6V489.2M421.5 499.6V488.8M422.0 499.8V492.2M422.5 500.8V487.2M423.0 500.8V490.2M423.5 502.4V485.4M424.0 498.7V490.7M424.5 499.4V488.1M425.0 500.5V491.3M425.5 500.8V489.8M426.0 499.0V492.7M426.5 500.8V493.0M427.0 499.1V485.9M427.5 496.0V486.8M428.0 497.8V486.9M428.5 500.4V486.9M429.0 501.8V480.2M429.5 501.8V481.3M430.0 497.3V489.3M430.5 499.0V480.7M431.0 497.2V484.9M431.5 499.2V484.6M432.0 501.1V484.6M432.5 501.1V489.3M433.0 499.7V488.8M433.5 497.8V486.7M434.0 501.2V485.4M434.5 501.9V485.4M435.0 499.9V494.3M435.5 500.5V494.7M436.0 500.9V487.4M436.5 500.1V476.2M437.0 499.5V492.1M437.5 499.5V488.5M438.0 499.6V485.9M438.5 498.8V486.1M439.0 501.6V486.2M439.5 496.8V487.3M440.0 498.0V481.4M440.5 499.1V487.2M441.0 499.1V485.1M441.5 499.5V489.3M442.0 501.1V489.5M442.5 500.5V489.5M443.0 498.6V487.5M443.5 498.6V491.9M444.0 498.2V487.4M444.5 499.5V490.1M445.0 499.5V490.7M445.5 501.7V487.0M446.0 501.7V483.0M446.5 499.4V480.5M447.0 499.4V487.0M447.5 500.6V491.6M448.0 497.8V488.4M448.5 501.1V488.4M449.0 499.5V484.7M449.5 501.0V481.1M450.0 500.6V486.0M450.5 500.6V483.8M451.0 500.6V488.0M451.5 500.4V489.4M452.0 501.1V489.4M452.5 496.2V492.1M453.0 501.7V484.7M453.5 499.2V482.7M454.0 499.2V490.7M454.5 498.5V490.7M455.0 498.6V490.9M455.5 500.8V485.6M456.0 502.0V488.3M456.5 501.1V490.8M457.0 496.6V484.8M457.5 499.7V488.9M458.0 498.0V489.5M458.5 498.6V485.9M459.0 500.3V488.4M459.5 499.2V487.3M460.0 501.2V479.6M460.5 501.2V485.4M461.0 499.4V485.4M461.5 496.4V489.2M462.0 497.5V490.4M462.5 498.5V486.8M463.0 498.3V485.2M463.5 496.4V472.1M464.0 499.0V472.1M464.5 500.3V489.2M465.0 497.0V489.2M465.5 498.2V490.5M466.0 500.7V486.5M466.5 500.7V491.7M467.0 500.2V482.4M467.5 498.3V489.4M468.0 498.8V493.7M468.5 496.3V490.1M469.0 498.0V488.0M469.5 496.6V478.6M470.0 500.3V492.9M470.5 497.3V488.9M471.0 497.9V493.4M471.5 500.2V486.8M472.0 499.6V486.0M472.5 500.1V488.8M473.0 500.9V493.5M473.5 500.9V495.9M474.0 500.8V486.5M474.5 501.8V492.0M475.0 499.2V491.4M475.5 496.9V483.9M476.0 501.7V489.2M476.5 497.9V486.1M477.0 497.7V486.1M477.5 501.2V490.5M478.0 499.7V490.3M478.5 499.4V484.9M479.0 501.2V488.1M479.5 498.5V494.1M480.0 499.7V483.7M480.5 499.8V483.7M481.0 499.8V491.2M481.5 499.8V487.5M482.0 501.7V488.4M482.5 500.3V488.4M483.0 494.8V487.3M483.5 500.1V485.9M484.0 500.1V488.7M484.5 498.1V486.9M485.0 501.5V491.6M485.5 499.2V492.6M486.0 500.6V489.5M486.5 500.6V488.9M487.0 501.1V489.1M487.5 498.4V482.1M488.0 498.5V490.7M488.5 501.6V484.1M489.0 501.6V489.2M489.5 501.9V491.0M490.0 498.1V489.5M490.5 494.2V485.6M491.0 498.6V484.4M491.5 500.1V487.2M492.0 501.8V487.6M492.5 500.8V487.6M493.0 500.1V492.2M493.5 499.0V488.8M494.0 498.0V490.9M494.5 499.1V487.6M495.0 500.0V492.4M495.5 500.4V490.0M496.0 499.3V487.0M496.5 498.3V485.9M497.0 499.5V484.1M497.5 501.8V484.1M498.0 498.4V487.6M498.5 496.7V490.9M499.0 501.7V487.6M499.5 501.7V490.5M500.0 500.9V484.7M500.5 500.9V490.2M501.0 499.3V490.6M501.5 500.7V487.9M502.0 500.8V493.2M502.5 500.8V483.2M503.0 499.6V487.7M503.5 499.7V490.4M504.0 500.5V481.8M504.5 497.7V487.8M505.0 499.1V492.7M505.5 500.7V487.5M506.0 496.9V488.9M506.5 496.3V488.1M507.0 501.3V492.1M507.5 500.6V487.2M508.0 501.0V487.2M508.5 500.9V481.1M509.0 499.7V486.2M509.5 501.1V486.2M510.0 498.6V487.8M510.5 499.2V485.5M511.0 499.2V483.0M511.5 501.1V483.0M512.0 495.5V479.3M512.5 498.9V491.2M513.0 498.2V486.0M513.5 500.1V482.5M514.0 500.1V486.3M514.5 499.4V488.4M515.0 496.6V487.9M515.5 501.2V487.9M516.0 499.3V484.2M516.5 500.2V484.2M517.0 499.9V492.6M517.5 500.7V487.1M518.0 499.6V489.9M518.5 497.3V490.3M519.0 498.0V490.9M519.5 499.3V490.2M520.0 498.7V485.4M520.5 497.5V485.4M521.0 500.3V489.5M521.5 500.3V489.3M522.0 500.0V488.3M522.5 497.3V485.0M523.0 498.3V487.6M523.5 500.1V491.1M524.0 499.3V485.2M524.5 499.9V492.2M525.0 496.9V492.5M525.5 501.6V490.2M526.0 502.1V495.4M526.5 501.2V489.3M527.0 501.2V494.9M527.5 499.5V492.3M528.0 498.2V486.1M528.5 495.1V488.9M529.0 501.2V489.6M529.5 498.4V489.4M530.0 500.1V488.5M530.5 498.7V493.4M531.0 499.3V486.0M531.5 499.4V486.4M532.0 501.7V482.8M532.5 498.7V488.1M533.0 500.2V489.9M533.5 499.6V488.7M534.0 499.2V490.6M534.5 500.0V482.9M535.0 498.7V489.7M535.5 499.2V485.2M536.0 498.8V487.8M536.5 499.7V481.7M537.0 500.1V488.6M537.5 500.3V490.5M538.0 500.7V486.6M538.5 500.1V492.6M539.0 499.0V491.8M539.5 499.4V487.2M540.0 502.0V483.9M540.5 498.5V483.5M541.0 501.6V483.5M541.5 501.6V489.2M542.0 500.4V488.3M542.5 498.9V481.1M543.0 500.7V494.1M543.5 499.4V489.1M544.0 499.1V489.1M544.5 499.3V490.1M545.0 499.9V488.5M545.5 500.3V491.9M546.0 498.9V492.3M546.5 499.1V482.2M547.0 499.8V493.7M547.5 500.7V488.7M548.0 497.2V487.4M548.5 500.1V486.9M549.0 499.9V489.2M549.5 500.3V495.1M550.0 500.7V485.4M550.5 500.3V485.4M551.0 500.0V483.7M551.5 500.1V488.4M552.0 500.1V491.9M552.5 500.3V491.3M553.0 498.7V488.4M553.5 500.0V488.4M554.0 497.9V490.2M554.5 499.9V492.8M555.0 499.6V491.5M555.5 499.9V488.8M556.0 498.0V484.5M556.5 502.0V484.1M557.0 500.1V487.5M557.5 500.1V485.6M558.0 501.8V491.5M558.5 498.0V486.5M559.0 497.7V483.8M559.5 500.2V483.8M560.0 501.1V486.1M560.5 500.7V486.1M561.0 497.2V490.2M561.5 501.0V492.8M562.0 501.3V491.1M562.5 498.7V488.4M563.0 499.9V488.4M563.5 499.1V492.7M564.0 499.7V488.1M564.5 502.2V493.4M565.0 502.1V487.0M565.5 501.4V492.7M566.0 500.5V487.5M566.5 497.1V486.6M567.0 501.0V486.8M567.5 501.3V486.8M568.0 499.5V484.9M568.5 499.9V488.5M569.0 499.9V489.4M569.5 500.2V490.2M570.0 499.6V487.1M570.5 499.6V484.4M571.0 501.0V491.9M571.5 500.1V485.0M572.0 499.1V493.4M572.5 499.7V489.5M573.0 497.3V490.4M573.5 499.7V488.8M574.0 497.6V487.9M574.5 499.7V487.9M575.0 498.8V489.3M575.5 498.8V491.7M576.0 499.2V484.6M576.5 498.2V485.9M577.0 499.4V488.9M577.5 497.3V483.6M578.0 500.6V487.7M578.5 499.4V488.3M579.0 501.9V491.3M579.5 499.7V484.6M580.0 501.4V487.2M580.5 500.6V489.6M581.0 499.7V486.2M581.5 495.4V488.8M582.0 501.0V493.9M582.5 502.0V488.9M583.0 499.6V490.2M583.5 502.3V491.6M584.0 500.7V489.0M584.5 500.7V494.5M585.0 498.9V494.5M585.5 501.0V490.0M586.0 500.2V493.2M586.5 502.2V489.6M587.0 502.2V486.9M587.5 501.0V489.2M588.0 500.0V489.2M588.5 500.2V483.3M589.0 500.2V489.4M589.5 501.3V494.0M590.0 499.4V486.2M590.5 499.9V486.2M591.0 496.0V488.2M591.5 499.7V487.4M592.0 500.5V485.7M592.5 500.5V491.8M593.0 498.0V477.8M593.5 499.3V488.7M594.0 500.4V486.5M594.5 502.2V494.2M595.0 500.7V489.2M595.5 498.6V489.4M596.0 497.4V492.5M596.5 501.6V487.1M597.0 501.6V486.9M597.5 499.8V491.4M598.0 500.5V484.2M598.5 500.5V488.5M599.0 498.7V488.5M599.5 500.8V491.4M600.0 499.4V489.1M600.5 501.1V493.9M601.0 500.3V491.8M601.5 499.4V490.3M602.0 500.2V492.0M602.5 501.9V487.1M603.0 501.2V488.2M603.5 499.1V483.6M604.0 497.8V489.5M604.5 499.4V490.4M605.0 501.8V489.7M605.5 501.9V490.4M606.0 501.0V492.7M606.5 501.0V487.5M607.0 500.0V491.8M607.5 501.6V495.6M608.0 501.7V483.9M608.5 498.3V487.5M609.0 499.6V490.8M609.5 500.6V491.7M610.0 502.3V491.0M610.5 498.9V486.0M611.0 500.0V482.1M611.5 500.0V487.2M612.0 499.9V491.6M612.5 500.6V485.8M613.0 499.6V489.5M613.5 498.9V491.3M614.0 500.4V488.9M614.5 501.1V491.8M615.0 501.3V491.8M615.5 499.2V489.8M616.0 500.1V489.6M616.5 501.0V486.2M617.0 498.1V485.5M617.5 500.1V490.3M618.0 501.0V490.0M618.5 499.5V490.0M619.0 496.8V490.0M619.5 499.1V493.6M620.0 500.1V492.4M620.5 499.8V495.7M621.0 499.3V487.3M621.5 498.8V491.8M622.0 496.1V484.7M622.5 498.6V494.3M623.0 501.1V494.3M623.5 501.5V489.9M624.0 496.3V491.4M624.5 500.0V492.4M625.0 497.8V488.8M625.5 501.5V488.0M626.0 501.5V492.8M626.5 500.8V494.1M627.0 499.8V486.9M627.5 501.6V488.2M628.0 501.9V488.2M628.5 499.8V489.8M629.0 499.8V490.3M629.5 499.6V493.0M630.0 502.0V491.1M630.5 498.9V487.6M631.0 500.3V491.9M631.5 500.1V493.5M632.0 495.8V488.8M632.5 502.2V487.3M633.0 501.5V488.9M633.5 500.0V493.3M634.0 499.9V485.5M634.5 500.9V491.3M635.0 499.2V485.5M635.5 501.1V488.1M636.0 500.2V488.1M636.5 497.8V491.5M637.0 498.5V493.9M637.5 501.0V492.5M638.0 498.8V488.6M638.5 500.6V490.8M639.0 501.5V491.0M639.5 497.3V489.5M640.0 501.4V486.8M640.5 499.5V489.6M641.0 499.5V489.2M641.5 501.3V494.8M642.0 501.6V491.2M642.5 498.9V489.3M643.0 499.3V489.3M643.5 500.7V491.4M644.0 500.5V488.1M644.5 501.3V492.0M645.0 500.1V484.7M645.5 499.2V490.4M646.0 500.6V490.2M646.5 501.8V493.9M647.0 501.0V492.2M647.5 499.2V489.8M648.0 499.4V489.8M648.5 499.6V489.2M649.0 501.0V488.5M649.5 502.2V488.5M650.0 502.2V489.7M650.5 496.7V489.7M651.0 496.6V486.3M651.5 499.4V489.6M652.0 498.6V488.5M652.5 500.1V487.2M653.0 499.2V489.4M653.5 502.0V490.3M654.0 498.4V493.4M654.5 502.1V488.6M655.0 497.3V485.1M655.5 497.8V491.3M656.0 501.0V486.5M656.5 500.2V491.1M657.0 498.7V489.6M657.5 501.0V489.6M658.0 496.5V483.8M658.5 499.0V491.8M659.0 500.4V491.6M659.5 496.5V489.9M660.0 499.9V485.5M660.5 496.8V489.1M661.0 500.3V490.6M661.5 497.7V492.4M662.0 501.6V491.3M662.5 501.6V494.5M663.0 500.3V484.1M663.5 499.7V493.3M664.0 500.3V488.9M664.5 501.1V487.9M665.0 501.0V492.1M665.5 497.5V489.1M666.0 497.5V490.5M666.5 500.6V487.8M667.0 501.3V487.8M667.5 499.9V487.8M668.0 495.8V487.0M668.5 501.7V492.9M669.0 501.7V490.6M669.5 496.7V487.2M670.0 501.0V493.0M670.5 500.0V490.8M671.0 501.3V489.2M671.5 499.9V489.2M672.0 500.9V489.8M672.5 499.6V489.9M673.0 498.0V490.0M673.5 500.2V491.4M674.0 500.2V491.0M674.5 499.7V488.7M675.0 498.9V489.4M675.5 501.5V488.9M676.0 499.4V490.8M676.5 499.9V492.8M677.0 500.4V487.8M677.5 502.4V492.0M678.0 499.5V484.8M678.5 502.2V483.7M679.0 500.2V489.0M679.5 499.4V482.9M680.0 498.4V488.9M680.5 496.1V485.7M681.0 502.3V485.7M681.5 501.1V487.5M682.0 496.9V484.8M682.5 500.5V493.6M683.0 498.3V488.8M683.5 501.6V493.7M684.0 498.8V491.3M684.5 501.7V490.6M685.0 499.2V487.5M685.5 498.7V487.5M686.0 501.2V485.6M686.5 499.7V491.3M687.0 499.2V492.0M687.5 499.2V492.7M688.0 499.1V489.6M688.5 499.7V486.8M689.0 499.7V495.1M689.5 499.4V494.4M690.0 498.5V488.3M690.5 501.7V490.5M691.0 498.2V484.1M691.5 499.6V488.4M692.0 499.6V487.5M692.5 501.0V490.3M693.0 499.6V491.7M693.5 501.6V490.7M694.0 497.9V489.6M694.5 501.0V488.6M695.0 501.3V491.1M695.5 501.3V487.0M696.0 500.8V484.6M696.5 499.7V492.2M697.0 496.9V485.5M697.5 500.8V485.9M698.0 501.8V494.8M698.5 501.8V489.4M699.0 498.9V493.9M699.5 497.9V485.2M700.0 498.4V480.7M700.5 499.5V492.4M701.0 499.3V489.1M701.5 498.2V483.7M702.0 501.8V489.0M702.5 497.8V491.8M703.0 498.8V491.5M703.5 499.3V490.4M704.0 501.7V490.4M704.5 498.2V492.1M705.0 499.3V495.6M705.5 496.6V490.1M706.0 501.3V479.8M706.5 498.9V479.8M707.0 498.6V488.7M707.5 499.5V490.0M708.0 499.5V489.8M708.5 501.8V490.1M709.0 499.7V487.6M709.5 497.2V487.6M710.0 500.8V494.1M710.5 500.8V494.6M711.0 501.4V487.2M711.5 500.1V487.2M712.0 500.8V486.7M712.5 500.8V494.0M713.0 501.5V494.9M713.5 500.0V491.8M714.0 496.7V485.0M714.5 501.4V493.6M715.0 497.6V483.4M715.5 497.6V487.9M716.0 497.7V482.9M716.5 499.3V482.9M717.0 502.5V493.0M717.5 502.5V492.1M718.0 499.3V493.4M718.5 500.1V494.9M719.0 499.9V488.7M719.5 500.4V488.7M720.0 500.8V487.9M720.5 497.6V491.1M721.0 502.4V494.0M721.5 498.3V485.2M722.0 495.1V487.0M722.5 498.8V487.4M723.0 500.7V486.3M723.5 500.8V489.8M724.0 497.9V488.1M724.5 499.1V488.1M725.0 498.8V491.4M725.5 500.0V492.2M726.0 498.6V487.0M726.5 501.2V490.0M727.0 499.2V484.3M727.5 498.4V491.9M728.0 501.3V487.4M728.5 499.2V490.3M729.0 500.5V491.2M729.5 502.0V491.4M730.0 498.7V488.3M730.5 500.4V488.8M731.0 500.3V488.8M731.5 499.0V492.7M732.0 499.0V490.6M732.5 502.1V489.8M733.0 502.0V492.1M733.5 501.0V486.0M734.0 500.2V493.2M734.5 499.8V494.1M735.0 499.0V490.3M735.5 499.0V486.6M736.0 499.0V485.5M736.5 494.7V486.8M737.0 501.4V491.9M737.5 501.4V491.9M738.0 500.3V490.4M738.5 500.3V492.6M739.0 500.9V490.9M739.5 501.4V488.3M740.0 501.4V483.9M740.5 498.5V489.1M741.0 500.0V489.1M741.5 498.9V490.7M742.0 500.3V488.6M742.5 497.6V489.7M743.0 501.4V491.4M743.5 497.4V491.7M744.0 498.5V489.3M744.5 499.6V490.9M745.0 500.3V495.2M745.5 499.7V489.4M746.0 499.3V489.2M746.5 498.8V488.4M747.0 499.3V490.0M747.5 501.0V487.9M748.0 496.7V485.7M748.5 498.4V491.4M749.0 499.2V488.2M749.5 500.9V492.8M750.0 500.3V492.1M750.5 498.5V490.7M751.0 501.2V490.7M751.5 499.8V492.4M752.0 499.5V493.2M752.5 500.0V482.2M753.0 501.6V493.9M753.5 501.2V496.2M754.0 499.6V491.7M754.5 500.6V491.2M755.0 498.2V489.0M755.5 496.5V489.0M756.0 501.3V493.0M756.5 500.5V491.6M757.0 496.8V490.8M757.5 498.8V491.0M758.0 500.4V491.0M758.5 500.4V488.2M759.0 498.3V486.7M759.5 498.0V486.7M760.0 500.5V489.0M760.5 499.0V490.8M761.0 502.0V494.4M761.5 501.9V490.5M762.0 500.2V490.5M762.5 501.1V490.9M763.0 500.9V486.0M763.5 500.9V491.5M764.0 499.1V489.4M764.5 501.8V494.6M765.0 499.6V489.3M765.5 499.9V489.3M766.0 499.9V492.5M766.5 499.9V479.4M767.0 500.2V495.1M767.5 501.0V488.4M768.0 501.4V489.4M768.5 497.3V493.9M769.0 500.9V492.6M769.5 499.4V492.6M770.0 501.3V493.7M770.5 499.8V488.9M771.0 502.2V491.8M771.5 499.6V491.6M772.0 501.5V491.9M772.5 502.3V493.4M773.0 500.0V487.2M773.5 501.0V495.2M774.0 500.4V491.5M774.5 501.3V491.9M775.0 497.6V489.8M775.5 499.9V490.6M776.0 501.4V493.6M776.5 500.0V488.6M777.0 499.9V489.9M777.5 499.0V492.7M778.0 501.6V490.2M778.5 501.2V483.9M779.0 499.1V490.0M779.5 500.3V493.6M780.0 498.6V493.2M780.5 501.0V490.7M781.0 501.4V494.9M781.5 500.2V491.5M782.0 500.0V484.2M782.5 501.4V493.8M783.0 500.7V489.3M783.5 500.3V490.6M784.0 498.0V489.3M784.5 500.8V487.9M785.0 499.6V489.9M785.5 498.0V491.0M786.0 499.7V491.0M786.5 500.9V489.0M787.0 499.6V491.4M787.5 499.2V492.4M788.0 499.2V490.4M788.5 499.0V493.0M789.0 500.6V490.7M789.5 501.0V492.9M790.0 496.7V486.5M790.5 499.8V491.8M791.0 498.6V489.7M791.5 500.7V492.8M792.0 499.2V493.9M792.5 500.2V489.7M793.0 500.9V488.1M793.5 498.2V488.1M794.0 499.8V494.7M794.5 502.0V494.2M795.0 501.8V495.2M795.5 501.6V494.7M796.0 499.6V487.5M796.5 500.8V486.6M797.0 499.8V485.6M797.5 499.6V497.1M798.0 501.8V490.6M798.5 501.1V490.2M799.0 498.4V492.2M799.5 496.1V490.5M800.0 501.9V488.3M800.5 498.6V493.3M801.0 499.9V490.3M801.5 499.6V488.0M802.0 498.0V491.7M802.5 499.9V489.0M803.0 499.9V487.5M803.5 498.8V489.7M804.0 502.5V485.1M804.5 501.2V493.5M805.0 498.8V492.6M805.5 499.4V491.3M806.0 501.1V492.8M806.5 496.5V490.5M807.0 497.3V491.4M807.5 500.4V491.3M808.0 498.7V490.4M808.5 499.7V492.4M809.0 497.4V493.3M809.5 496.0V488.8M810.0 501.4V486.0M810.5 497.7V487.0M811.0 499.8V487.0M811.5 500.2V493.5M812.0 502.0V495.9M812.5 500.2V487.7M813.0 500.2V491.7M813.5 501.2V487.6M814.0 498.9V494.4M814.5 498.8V490.1M815.0 501.6V486.8M815.5 500.8V491.4M816.0 500.0V491.3M816.5 502.2V493.9M817.0 502.2V492.1M817.5 500.1V492.6M818.0 496.2V488.8M818.5 500.7V488.7M819.0 500.5V486.4M819.5 498.5V487.2M820.0 501.3V486.2M820.5 497.6V488.4M821.0 497.4V489.7M821.5 500.1V492.7M822.0 498.0V491.7M822.5 500.1V487.7M823.0 500.7V487.7M823.5 499.2V489.8M824.0 499.6V492.9M824.5 499.7V493.3M825.0 500.3V488.4M825.5 496.9V492.5M826.0 500.5V490.3M826.5 498.3V489.0M827.0 501.6V487.1M827.5 500.6V491.0M828.0 496.1V489.8M828.5 499.1V489.8M829.0 499.1V488.0M829.5 501.1V494.5M830.0 501.5V493.0M830.5 500.8V490.9M831.0 501.7V489.5M831.5 500.6V489.5M832.0 501.2V492.0M832.5 501.0V488.5M833.0 501.4V490.6M833.5 498.7V491.4M834.0 500.4V489.7M834.5 500.5V492.1M835.0 497.7V491.6M835.5 501.8V489.8M836.0 499.6V488.2M836.5 500.4V492.2M837.0 500.2V494.6M837.5 501.5V486.5M838.0 499.8V493.4M838.5 500.4V489.0M839.0 500.4V495.4M839.5 502.4V489.2M840.0 502.4V495.8M840.5 499.8V488.7M841.0 500.3V491.3M841.5 499.0V494.3M842.0 499.7V487.6M842.5 498.7V487.7M843.0 499.8V492.7M843.5 501.1V493.4M844.0 499.6V486.8M844.5 498.3V493.7M845.0 502.5V484.0M845.5 500.7V488.9M846.0 500.2V494.4M846.5 499.7V490.5M847.0 500.6V488.4M847.5 500.8V494.1M848.0 498.0V490.0M848.5 496.9V491.2M849.0 500.5V493.6M849.5 500.5V491.4M850.0 499.9V486.3M850.5 500.6V486.1M851.0 499.5V485.9M851.5 501.0V493.1M852.0 500.2V489.9M852.5 501.3V486.2M853.0 500.5V491.4M853.5 500.6V491.4M854.0 500.4V490.3M854.5 500.9V493.2M855.0 500.9V489.4M855.5 500.4V493.2M856.0 499.5V488.1M856.5 499.5V488.6M857.0 499.2V490.6M857.5 500.4V494.8M858.0 498.5V489.8M858.5 498.2V490.7M859.0 498.3V491.4M859.5 500.4V491.5M860.0 499.2V495.1M860.5 501.7V494.5M861.0 498.6V489.9M861.5 500.2V486.4M862.0 502.2V493.9M862.5 499.4V492.1M863.0 498.4V492.1M863.5 497.9V491.4M864.0 500.6V491.8M864.5 499.6V491.2M865.0 499.6V490.0M865.5 499.8V491.6M866.0 499.6V493.3M866.5 500.1V489.2M867.0 500.5V489.2M867.5 498.5V490.0M868.0 499.2V490.6M868.5 502.0V489.5M869.0 500.8V487.6M869.5 501.1V492.1M870.0 499.4V492.6M870.5 498.5V489.2M871.0 501.1V491.2M871.5 497.6V494.0M872.0 499.2V489.4M872.5 497.4V490.2M873.0 500.2V489.0M873.5 499.9V489.0M874.0 498.8V490.2M874.5 500.4V486.0M875.0 501.0V490.1M875.5 498.5V489.1M876.0 497.0V488.8M876.5 501.4V492.6M877.0 501.4V490.5M877.5 501.8V486.2M878.0 500.5V491.8M878.5 498.8V493.6M879.0 499.5V488.2M879.5 501.7V493.8M880.0 500.7V491.8M880.5 498.9V491.7M881.0 500.6V494.2M881.5 499.1V495.4M882.0 499.7V490.0M882.5 499.6V489.7M883.0 500.3V489.2M883.5 500.7V492.2M884.0 502.2V488.7M884.5 500.7V489.6M885.0 501.4V491.9M885.5 501.2V484.8M886.0 499.7V488.9M886.5 500.7V485.6M887.0 500.9V485.6M887.5 500.9V495.2M888.0 500.3V489.7M888.5 497.9V489.7M889.0 498.6V491.2M889.5 498.4V492.9M890.0 500.9V489.9M890.5 499.5V491.3M891.0 496.3V488.2M891.5 500.4V491.9M892.0 500.0V489.0M892.5 499.9V488.9M893.0 498.5V492.0M893.5 496.7V491.4M894.0 502.6V496.7M894.5 497.5V487.8M895.0 498.0V491.5M895.5 501.3V494.2M896.0 499.4V487.5M896.5 500.0V488.8M897.0 498.4V490.9M897.5 499.5V488.4M898.0 500.4V491.4M898.5 501.1V491.6M899.0 501.1V490.1M899.5 500.3V490.7M900.0 498.1V487.3M900.5 498.7V492.7M901.0 499.0V491.5M901.5 501.8V490.4M902.0 501.8V492.8M902.5 500.5V490.5M903.0 502.1V490.5M903.5 500.6V492.2M904.0 501.9V494.8M904.5 499.8V493.3M905.0 500.8V489.2M905.5 498.9V490.9M906.0 499.2V490.4M906.5 500.0V492.3M907.0 501.0V492.5M907.5 498.6V492.8M908.0 500.5V492.9M908.5 498.7V488.8M909.0 498.7V486.5M909.5 501.9V492.2M910.0 501.1V486.5M910.5 499.9V487.3M911.0 499.9V491.7M911.5 502.4V487.9M912.0 500.0V487.9M912.5 499.2V488.0M913.0 502.4V493.4M913.5 502.2V488.8M914.0 499.9V491.3M914.5 497.9V491.9M915.0 500.0V490.8M915.5 499.5V488.2M916.0 500.0V491.0M916.5 498.7V492.9M917.0 500.8V488.6M917.5 501.4V488.7M918.0 502.6V494.1M918.5 501.1V492.0M919.0 501.1V493.6M919.5 500.2V486.4M920.0 501.5V487.7M920.5 499.7V487.7M921.0 499.6V494.0M921.5 498.8V492.4M922.0 501.8V491.3M922.5 501.8V493.7M923.0 500.3V487.5M923.5 500.3V493.0M924.0 499.0V490.0M924.5 500.4V491.0M925.0 499.2V487.5M925.5 497.3V491.8M926.0 497.4V493.9M926.5 500.5V490.2M927.0 500.5V491.6M927.5 500.4V483.8M928.0 500.3V491.2M928.5 501.8V488.4M929.0 501.4V483.5M929.5 501.5V488.5M930.0 495.0V490.4M930.5 499.8V490.4M931.0 499.3V488.5M931.5 498.1V486.9M932.0 500.0V486.9M932.5 501.9V492.1M933.0 500.7V490.0M933.5 501.4V490.5M934.0 500.9V491.9M934.5 499.7V489.8M935.0 500.3V490.7M935.5 499.2V493.1M936.0 499.8V488.5M936.5 502.1V491.2M937.0 499.0V493.7M937.5 498.7V489.3M938.0 500.1V492.9M938.5 501.7V489.9M939.0 499.4V492.6M939.5 499.0V489.4M940.0 499.7V490.4M940.5 499.6V492.4M941.0 499.2V493.3M941.5 498.4V492.2M942.0 500.2V490.5M942.5 499.0V489.8M943.0 497.0V486.2M943.5 502.0V490.9M944.0 498.7V489.1M944.5 499.1V492.0M945.0 499.9V492.3M945.5 500.5V494.1M946.0 500.5V493.7M946.5 501.1V492.5M947.0 499.6V488.1M947.5 499.4V490.2M948.0 499.2V486.9M948.5 500.8V490.2M949.0 498.1V487.8M949.5 499.1V488.2M950.0 501.4V485.9M950.5 499.9V486.0M951.0 501.7V486.0M951.5 496.0V489.8M952.0 501.4V489.9M952.5 498.6V489.4M953.0 499.8V485.7M953.5 501.2V485.3M954.0 501.2V489.8M954.5 500.2V484.6M955.0 498.1V484.6M955.5 499.5V496.4M956.0 499.5V488.4M956.5 501.0V489.0M957.0 499.1V490.1M957.5 501.8V491.6M958.0 501.8V495.4M958.5 498.8V489.1M959.0 499.8V492.0M959.5 498.1V490.7M960.0 498.1V489.0M960.5 499.2V487.0M961.0 499.2V488.9M961.5 501.4V486.3M962.0 501.4V490.3M962.5 498.2V490.3M963.0 500.2V492.7M963.5 501.4V489.4M964.0 498.7V489.0M964.5 499.7V487.2M965.0 499.4V492.2M965.5 499.4V492.7M966.0 501.9V493.3M966.5 500.1V487.6M967.0 498.7V490.8M967.5 500.3V488.8M968.0 498.9V488.3M968.5 499.7V491.0M969.0 501.2V488.0M969.5 498.2V489.8M970.0 500.2V489.8M970.5 501.3V491.4M971.0 497.1V488.2M971.5 501.4V491.0M972.0 500.6V492.0M972.5 500.1V488.0M973.0 497.3V487.7M973.5 501.7V494.8M974.0 501.7V487.8M974.5 501.1V495.0M975.0 498.9V491.3M975.5 499.6V491.4M976.0 498.2V491.0M976.5 502.2V491.1M977.0 497.0V489.5M977.5 501.2V491.9M978.0 502.3V486.5M978.5 498.7V492.0M979.0 501.8V494.6M979.5 498.7V491.5M980.0 500.9V489.7M980.5 498.6V489.7M981.0 500.7V494.0M981.5 501.7V491.4M982.0 500.7V488.8M982.5 500.7V488.7M983.0 500.7V486.4M983.5 500.7V486.9M984.0 501.8V486.9M984.5 498.2V495.1M985.0 499.1V488.8M985.5 500.4V493.5M986.0 500.4V490.6M986.5 500.8V492.7M987.0 501.1V493.1M987.5 502.3V486.4M988.0 500.6V490.9M988.5 500.1V493.2M989.0 500.1V486.8M989.5 499.5V492.3M990.0 499.1V492.2M990.5 499.0V489.9M991.0 499.9V489.6M991.5 501.6V495.3M992.0 500.9V484.5M992.5 500.7V490.3M993.0 500.7V485.0M993.5 499.3V490.0M994.0 501.2V492.3M994.5 500.4V493.4M995.0 501.2V493.4M995.5 501.1V491.1M996.0 501.2V490.8M996.5 499.0V493.1M997.0 497.6V490.3M997.5 500.4V490.3M998.0 499.3V492.1M998.5 502.1V488.5M999.0 500.2V489.1M999.5 500.2V487.0M1000.0 501.6V492.4M1000.5 499.3V486.7M1001.0 499.9V491.7M1001.5 498.1V492.0M1002.0 500.4V489.4M1002.5 499.3V489.6M1003.0 502.2V493.7M1003.5 502.2V489.9M1004.0 495.6V491.3M1004.5 499.6V490.6M1005.0 501.1V491.0M1005.5 501.1V495.3M1006.0 498.1V488.9M1006.5 499.0V493.7M1007.0 501.6V486.4M1007.5 498.8V491.8M1008.0 501.3V487.9M1008.5 501.3V490.9M1009.0 501.0V491.1M1009.5 499.2V487.9M1010.0 499.0V487.0M1010.5 500.1V494.0M1011.0 500.7V486.4M1011.5 501.0V490.5M1012.0 498.9V493.4M1012.5 497.8V489.6M1013.0 496.1V490.2M1013.5 498.3V490.8M1014.0 501.9V491.8M1014.5 501.2V490.4M1015.0 499.7V491.4M1015.5 500.0V489.4M1016.0 494.3V484.1M1016.5 499.7V489.1M1017.0 499.1V490.3M1017.5 500.6V495.2M1018.0 501.6V493.8M1018.5 501.6V483.5M1019.0 501.4V490.9M1019.5 497.5V483.1M1020.0 501.0V489.8M1020.5 501.0V496.1M1021.0 500.3V490.3M1021.5 501.7V490.9M1022.0 501.7V488.9M1022.5 500.0V492.0M1023.0 497.8V490.8M1023.5 501.0V492.8M1024.0 499.1V486.1M1024.5 496.9V486.1M1025.0 498.9V493.9M1025.5 501.7V492.7M1026.0 501.8V492.7M1026.5 500.2V487.9M1027.0 500.0V490.0M1027.5 501.1V492.2M1028.0 498.7V493.1M1028.5 500.9V490.4M1029.0 499.4V493.4M1029.5 494.6V480.0M1030.0 501.2V487.7M1030.5 501.2V490.3M1031.0 500.3V490.5M1031.5 500.4V489.2M1032.0 497.1V492.9M1032.5 497.4V490.7M1033.0 500.7V487.2M1033.5 500.5V484.6M1034.0 500.6V493.4M1034.5 501.7V491.5M1035.0 497.5V491.5M1035.5 502.1V491.7M1036.0 501.4V480.0M1036.5 501.4V492.3M1037.0 499.0V490.2M1037.5 501.6V491.6M1038.0 500.9V492.3M1038.5 501.7V492.3M1039.0 501.8V491.5M1039.5 499.9V486.6M1040.0 501.9V497.1M1040.5 501.4V494.1M1041.0 501.5V494.6M1041.5 501.4V495.8M1042.0 499.8V492.5M1042.5 501.3V492.5M1043.0 499.5V486.5M1043.5 498.3V484.5M1044.0 500.1V484.5M1044.5 499.9V488.7M1045.0 502.3V492.2M1045.5 500.8V490.6M1046.0 498.3V487.9M1046.5 499.5V490.3M1047.0 498.6V488.9M1047.5 500.6V493.5M1048.0 500.8V484.7M1048.5 499.3V493.8M1049.0 498.1V492.3M1049.5 499.6V491.7M1050.0 502.0V488.0M1050.5 502.0V487.5M1051.0 501.4V486.9M1051.5 501.9V490.8M1052.0 499.2V490.8M1052.5 500.3V491.8M1053.0 499.8V488.3M1053.5 501.8V488.5M1054.0 500.6V490.5M1054.5 499.6V495.2M1055.0 498.8V486.3M1055.5 501.8V486.5M1056.0 501.1V492.3M1056.5 502.3V489.3M1057.0 500.2V487.1M1057.5 499.7V492.4M1058.0 499.7V491.6M1058.5 497.4V488.8M1059.0 500.0V490.3M1059.5 499.5V492.9M1060.0 499.9V491.9M1060.5 501.4V490.1M1061.0 501.1V489.8M1061.5 500.1V492.0M1062.0 500.7V493.6M1062.5 500.8V494.3M1063.0 501.3V485.1M1063.5 502.1V497.0M1064.0 502.1V493.2M1064.5 498.2V490.4M1065.0 501.1V494.4M1065.5 498.0V492.3M1066.0 502.2V492.8M1066.5 501.2V492.5M1067.0 501.2V486.2M1067.5 497.0V489.6M1068.0 500.8V488.1M1068.5 500.8V491.2M1069.0 500.1V490.0M1069.5 499.5V488.5M1070.0 498.2V491.4M1070.5 497.5V490.4M1071.0 501.2V487.3M1071.5 498.7V489.9M1072.0 500.6V485.0M1072.5 500.6V489.5M1073.0 501.1V491.4M1073.5 500.7V491.6M1074.0 501.5V490.0M1074.5 500.6V485.2M1075.0 500.9V485.2M1075.5 500.3V490.0M1076.0 501.2V492.5M1076.5 501.2V489.6M1077.0 500.8V488.7" stroke="#00ff00" stroke-width="0.9" fill="none"/><path d="M56.30 496.7V414.3M70.20 496.7V469.2M80.60 496.7V301.8M105.10 496.7V456.6M114.90 496.7V403.7M129.50 496.7V467.1M153.80 496.7V461.5M170.20 496.7V432.5M193.60 496.7V433.4M199.50 496.7V461.5M218.90 496.7V453.4M227.20 496.7V465.6M232.90 496.7V463.0M292.30 496.7V474.3M350.50 496.7V435.5M409.50 496.7V475.8M635.25 496.7V479.5M645.25 496.7V456.2M704.50 496.7V478.0M881.00 496.7V481.0" stroke="#00ff00" stroke-width="1" fill="none"/><line x1="115.5" y1="281.5" x2="115.5" y2="503" stroke="#c01818" stroke-dasharray="2 2"/><path d="M53.5 504V281.5H1077.5V503" stroke="#9a9a9a" fill="none"/><line x1="53.5" y1="503.5" x2="1077.5" y2="503.5" stroke="#5a5a5a"/><line x1="51" y1="502.5" x2="53.5" y2="502.5" stroke="#8a96b4"/><line x1="51" y1="475.5" x2="53.5" y2="475.5" stroke="#8a96b4"/><line x1="51" y1="448.5" x2="53.5" y2="448.5" stroke="#8a96b4"/><line x1="51" y1="421.5" x2="53.5" y2="421.5" stroke="#8a96b4"/><line x1="51" y1="394.5" x2="53.5" y2="394.5" stroke="#8a96b4"/><line x1="51" y1="367.5" x2="53.5" y2="367.5" stroke="#8a96b4"/><line x1="51" y1="341.5" x2="53.5" y2="341.5" stroke="#8a96b4"/><line x1="51" y1="314.5" x2="53.5" y2="314.5" stroke="#8a96b4"/><line x1="51" y1="287.5" x2="53.5" y2="287.5" stroke="#8a96b4"/><line x1="51" y1="281.5" x2="53.5" y2="281.5" stroke="#8a96b4"/><line x1="55.5" y1="503" x2="55.5" y2="507" stroke="#808080"/><line x1="114.5" y1="503" x2="114.5" y2="507" stroke="#808080"/><line x1="174.5" y1="503" x2="174.5" y2="507" stroke="#808080"/><line x1="233.5" y1="503" x2="233.5" y2="507" stroke="#808080"/><line x1="292.5" y1="503" x2="292.5" y2="507" stroke="#808080"/><line x1="351.5" y1="503" x2="351.5" y2="507" stroke="#808080"/><line x1="411.5" y1="503" x2="411.5" y2="507" stroke="#808080"/><line x1="470.5" y1="503" x2="470.5" y2="507" stroke="#808080"/><line x1="529.5" y1="503" x2="529.5" y2="507" stroke="#808080"/><line x1="588.5" y1="503" x2="588.5" y2="507" stroke="#808080"/><line x1="648.5" y1="503" x2="648.5" y2="507" stroke="#808080"/><line x1="707.5" y1="503" x2="707.5" y2="507" stroke="#808080"/><line x1="766.5" y1="503" x2="766.5" y2="507" stroke="#808080"/><line x1="825.5" y1="503" x2="825.5" y2="507" stroke="#808080"/><line x1="885.5" y1="503" x2="885.5" y2="507" stroke="#808080"/><line x1="944.5" y1="503" x2="944.5" y2="507" stroke="#808080"/><line x1="1003.5" y1="503" x2="1003.5" y2="507" stroke="#808080"/><line x1="1062.5" y1="503" x2="1062.5" y2="507" stroke="#808080"/><line x1="60" y1="295" x2="80" y2="302" stroke="#c8c8c8" stroke-width="0.8"/><line x1="89.4" y1="392.3" x2="114.9" y2="403.7" stroke="#c8c8c8" stroke-width="0.8"/><line x1="174" y1="421.5" x2="193.5" y2="433.3" stroke="#c8c8c8" stroke-width="0.8"/><circle cx="114.9" cy="403.7" r="1.4" fill="#ff2020"/>
</svg>
<div style="position:absolute;left:-1px;top:20px;width:16px;height:15px;border:1px solid #5273b4;background:#1d3862"></div>
<svg style="left:0;top:20px" width="17" height="17" viewBox="0 0 17 17">
<line x1="2.5" y1="4" x2="2.5" y2="15.5" stroke="#2f7de0" stroke-width="1"/>
<path d="M1.3 5.5L2.5 3.5L3.7 5.5Z" fill="#2f7de0"/>
<line x1="2" y1="15.5" x2="15" y2="15.5" stroke="#2f7de0" stroke-width="1"/>
<line x1="8.5" y1="7.5" x2="8.5" y2="15" stroke="#d01818" stroke-width="1"/>
<path d="M7 9L8.5 6.5L10 9Z" fill="#d01818"/></svg>
<svg style="left:1.7000000000000002px;top:40.2px" width="12" height="12" viewBox="0 0 12 12">
<path d="M6 1.5L10.5 6L6 10.5L1.5 6Z" fill="#1f4f96"/>
<g fill="#5ea2f0"><circle cx="6" cy="2.4" r="1.5"/><circle cx="6" cy="9.6" r="1.5"/><circle cx="2.4" cy="6" r="1.5"/><circle cx="9.6" cy="6" r="1.5"/></g>
<circle cx="6" cy="6" r="1" fill="#d02020"/></svg>
<div style="position:absolute;left:-1px;top:280.5px;width:16px;height:15px;border:1px solid #5273b4;background:#1d3862"></div>
<svg style="left:0;top:280.5px" width="17" height="17" viewBox="0 0 17 17">
<line x1="2.5" y1="4" x2="2.5" y2="15.5" stroke="#2f7de0" stroke-width="1"/>
<path d="M1.3 5.5L2.5 3.5L3.7 5.5Z" fill="#2f7de0"/>
<line x1="2" y1="15.5" x2="15" y2="15.5" stroke="#2f7de0" stroke-width="1"/>
<line x1="8.5" y1="7.5" x2="8.5" y2="15" stroke="#d01818" stroke-width="1"/>
<path d="M7 9L8.5 6.5L10 9Z" fill="#d01818"/></svg>
<svg style="left:0;top:299.5px" width="17" height="14" viewBox="0 0 17 14">
<line x1="2.5" y1="2" x2="2.5" y2="12.5" stroke="#2f7de0"/><path d="M1.3 3.3L2.5 1L3.7 3.3Z" fill="#2f7de0"/>
<line x1="2" y1="12.5" x2="15" y2="12.5" stroke="#2f7de0"/><line x1="5.5" y1="5.5" x2="5.5" y2="12" stroke="#d01818"/><path d="M4.2 6.5L5.5 4.3L6.8 6.5Z" fill="#d01818"/><line x1="8.5" y1="5.5" x2="8.5" y2="12" stroke="#2f7de0"/><path d="M7.2 6.5L8.5 4.3L9.8 6.5Z" fill="#2f7de0"/><line x1="11.5" y1="5.5" x2="11.5" y2="12" stroke="#2f7de0"/><path d="M10.2 6.5L11.5 4.3L12.8 6.5Z" fill="#2f7de0"/></svg>
<svg style="left:0;top:316.5px" width="17" height="14" viewBox="0 0 17 14">
<line x1="2.5" y1="2" x2="2.5" y2="12.5" stroke="#2f7de0"/><path d="M1.3 3.3L2.5 1L3.7 3.3Z" fill="#2f7de0"/>
<line x1="2" y1="12.5" x2="15" y2="12.5" stroke="#2f7de0"/><line x1="5.5" y1="5.5" x2="5.5" y2="12" stroke="#2f7de0"/><path d="M4.2 6.5L5.5 4.3L6.8 6.5Z" fill="#2f7de0"/><line x1="8.5" y1="5.5" x2="8.5" y2="12" stroke="#d01818"/><path d="M7.2 6.5L8.5 4.3L9.8 6.5Z" fill="#d01818"/><line x1="11.5" y1="5.5" x2="11.5" y2="12" stroke="#2f7de0"/><path d="M10.2 6.5L11.5 4.3L12.8 6.5Z" fill="#2f7de0"/></svg>
<svg style="left:1.9000000000000004px;top:333.7px" width="12" height="12" viewBox="0 0 12 12">
<path d="M6 1.5L10.5 6L6 10.5L1.5 6Z" fill="#1f4f96"/>
<g fill="#5ea2f0"><circle cx="6" cy="2.4" r="1.5"/><circle cx="6" cy="9.6" r="1.5"/><circle cx="2.4" cy="6" r="1.5"/><circle cx="9.6" cy="6" r="1.5"/></g>
<circle cx="6" cy="6" r="1" fill="#d02020"/></svg>
<svg style="left:1063px;top:3.5px" width="12" height="12" viewBox="0 0 12 12" fill="none" stroke="#c4c4c4" stroke-width="1.1">
<path d="M1.2 4.2V1.2H4.2M1.2 1.2L5 5"/><path d="M10.8 4.2V1.2H7.8M10.8 1.2L7 5"/><path d="M1.2 7.8V10.8H4.2M1.2 10.8L5 7"/><path d="M10.8 7.8V10.8H7.8M10.8 10.8L7 7"/></svg>
<svg style="left:1063px;top:264px" width="12" height="12" viewBox="0 0 12 12" fill="none" stroke="#c4c4c4" stroke-width="1.1">
<path d="M1.2 4.2V1.2H4.2M1.2 1.2L5 5"/><path d="M10.8 4.2V1.2H7.8M10.8 1.2L7 5"/><path d="M1.2 7.8V10.8H4.2M1.2 10.8L5 7"/><path d="M10.8 7.8V10.8H7.8M10.8 10.8L7 7"/></svg>
<div class="t" style="left:3.0px;top:5.2px;font-size:8px;line-height:10px;color:#e8eaf0;font-weight:400;transform:scaleX(0.864)">聚自由端4A/512K加速度(20000Hz) 2023/02/18 00:00:07</div><div class="t" style="left:188.6px;top:5.2px;font-size:8px;line-height:10px;color:#e8eaf0;font-weight:400;transform:scaleX(0.915)">29.816m/s^2</div><div class="t" style="left:240.2px;top:5.2px;font-size:8px;line-height:10px;color:#e8eaf0;font-weight:400;transform:scaleX(0.805)">0RPM</div><div class="t" style="left:3.0px;top:265.3px;font-size:8px;line-height:10px;color:#e8eaf0;font-weight:400;transform:scaleX(0.864)">聚自由端4A/512K加速度(20000Hz) 2023/02/18 00:00:07</div><div class="t" style="left:188.6px;top:265.3px;font-size:8px;line-height:10px;color:#e8eaf0;font-weight:400;transform:scaleX(0.915)">29.816m/s^2</div><div class="t" style="left:240.2px;top:265.3px;font-size:8px;line-height:10px;color:#e8eaf0;font-weight:400;transform:scaleX(0.805)">0RPM</div><div class="t" style="left:268.8px;top:5.2px;font-size:8px;line-height:10px;color:#e8eaf0;font-weight:400;transform:scaleX(0.845)">10794.629Hz</div><div class="t" style="left:317.2px;top:5.2px;font-size:8px;line-height:10px;color:#e8eaf0;font-weight:400;transform:scaleX(0.916)">0.04m/s^2</div><div class="t" style="left:360.9px;top:5.2px;font-size:8px;line-height:10px;color:#e8eaf0;font-weight:400;transform:scaleX(0.864)">△f=2883.887Hz</div><div class="t" style="left:268.4px;top:265.3px;font-size:8px;line-height:10px;color:#e8eaf0;font-weight:400;transform:scaleX(0.844)">49.805Hz</div><div class="t" style="left:305.5px;top:265.3px;font-size:8px;line-height:10px;color:#e8eaf0;font-weight:400;transform:scaleX(0.917)">0.369m/s^2</div><div class="t" style="left:45.9px;top:237.5px;font-size:7px;line-height:10px;color:#e6e6e6;font-weight:400;transform:scaleX(0.909)">0</div><div class="t" style="left:37.4px;top:216.9px;font-size:7px;line-height:10px;color:#e6e6e6;font-weight:400;transform:scaleX(0.884)">0.25</div><div class="t" style="left:40.9px;top:196.2px;font-size:7px;line-height:10px;color:#e6e6e6;font-weight:400;transform:scaleX(0.873)">0.5</div><div class="t" style="left:37.4px;top:175.6px;font-size:7px;line-height:10px;color:#e6e6e6;font-weight:400;transform:scaleX(0.884)">0.75</div><div class="t" style="left:46.8px;top:154.9px;font-size:7px;line-height:10px;color:#e6e6e6;font-weight:400;transform:scaleX(0.666)">1</div><div class="t" style="left:38.3px;top:134.3px;font-size:7px;line-height:10px;color:#e6e6e6;font-weight:400;transform:scaleX(0.815)">1.25</div><div class="t" style="left:41.9px;top:113.7px;font-size:7px;line-height:10px;color:#e6e6e6;font-weight:400;transform:scaleX(0.776)">1.5</div><div class="t" style="left:38.3px;top:93.0px;font-size:7px;line-height:10px;color:#e6e6e6;font-weight:400;transform:scaleX(0.815)">1.75</div><div class="t" style="left:45.9px;top:72.4px;font-size:7px;line-height:10px;color:#e6e6e6;font-weight:400;transform:scaleX(0.909)">2</div><div class="t" style="left:37.4px;top:51.8px;font-size:7px;line-height:10px;color:#e6e6e6;font-weight:400;transform:scaleX(0.884)">2.25</div><div class="t" style="left:40.9px;top:31.1px;font-size:7px;line-height:10px;color:#e6e6e6;font-weight:400;transform:scaleX(0.873)">2.5</div><div class="t" style="left:33.8px;top:16.5px;font-size:7px;line-height:10px;color:#e6e6e6;font-weight:400;transform:scaleX(0.890)">2.677</div><div class="t" style="left:46.1px;top:498.3px;font-size:7px;line-height:10px;color:#e6e6e6;font-weight:400;transform:scaleX(0.909)">0</div><div class="t" style="left:42.1px;top:471.4px;font-size:7px;line-height:10px;color:#e6e6e6;font-weight:400;transform:scaleX(0.776)">0.1</div><div class="t" style="left:41.1px;top:444.6px;font-size:7px;line-height:10px;color:#e6e6e6;font-weight:400;transform:scaleX(0.873)">0.2</div><div class="t" style="left:41.1px;top:417.7px;font-size:7px;line-height:10px;color:#e6e6e6;font-weight:400;transform:scaleX(0.873)">0.3</div><div class="t" style="left:41.1px;top:390.9px;font-size:7px;line-height:10px;color:#e6e6e6;font-weight:400;transform:scaleX(0.873)">0.4</div><div class="t" style="left:41.1px;top:364.0px;font-size:7px;line-height:10px;color:#e6e6e6;font-weight:400;transform:scaleX(0.873)">0.5</div><div class="t" style="left:41.1px;top:337.1px;font-size:7px;line-height:10px;color:#e6e6e6;font-weight:400;transform:scaleX(0.873)">0.6</div><div class="t" style="left:41.1px;top:310.3px;font-size:7px;line-height:10px;color:#e6e6e6;font-weight:400;transform:scaleX(0.873)">0.7</div><div class="t" style="left:34.0px;top:277.0px;font-size:7px;line-height:10px;color:#e6e6e6;font-weight:400;transform:scaleX(0.890)">0.824</div><div class="t" style="left:49.0px;top:247.0px;font-size:7px;line-height:10px;color:#e6e6e6;font-weight:400;transform:scaleX(0.843)">0Hz</div><div class="t" style="left:98.0px;top:247.0px;font-size:7px;line-height:10px;color:#e6e6e6;font-weight:400;transform:scaleX(0.851)">1000</div><div class="t" style="left:148.7px;top:247.0px;font-size:7px;line-height:10px;color:#e6e6e6;font-weight:400;transform:scaleX(0.912)">2000</div><div class="t" style="left:199.9px;top:247.0px;font-size:7px;line-height:10px;color:#e6e6e6;font-weight:400;transform:scaleX(0.912)">3000</div><div class="t" style="left:251.0px;top:247.0px;font-size:7px;line-height:10px;color:#e6e6e6;font-weight:400;transform:scaleX(0.912)">4000</div><div class="t" style="left:302.2px;top:247.0px;font-size:7px;line-height:10px;color:#e6e6e6;font-weight:400;transform:scaleX(0.912)">5000</div><div class="t" style="left:353.4px;top:247.0px;font-size:7px;line-height:10px;color:#e6e6e6;font-weight:400;transform:scaleX(0.912)">6000</div><div class="t" style="left:404.5px;top:247.0px;font-size:7px;line-height:10px;color:#e6e6e6;font-weight:400;transform:scaleX(0.912)">7000</div><div class="t" style="left:455.7px;top:247.0px;font-size:7px;line-height:10px;color:#e6e6e6;font-weight:400;transform:scaleX(0.912)">8000</div><div class="t" style="left:506.8px;top:247.0px;font-size:7px;line-height:10px;color:#e6e6e6;font-weight:400;transform:scaleX(0.912)">9000</div><div class="t" style="left:556.7px;top:247.0px;font-size:7px;line-height:10px;color:#e6e6e6;font-weight:400;transform:scaleX(0.863)">10000</div><div class="t" style="left:608.3px;top:247.0px;font-size:7px;line-height:10px;color:#e6e6e6;font-weight:400;transform:scaleX(0.836)">11000</div><div class="t" style="left:659.0px;top:247.0px;font-size:7px;line-height:10px;color:#e6e6e6;font-weight:400;transform:scaleX(0.863)">12000</div><div class="t" style="left:710.2px;top:247.0px;font-size:7px;line-height:10px;color:#e6e6e6;font-weight:400;transform:scaleX(0.863)">13000</div><div class="t" style="left:761.3px;top:247.0px;font-size:7px;line-height:10px;color:#e6e6e6;font-weight:400;transform:scaleX(0.863)">14000</div><div class="t" style="left:812.5px;top:247.0px;font-size:7px;line-height:10px;color:#e6e6e6;font-weight:400;transform:scaleX(0.863)">15000</div><div class="t" style="left:863.7px;top:247.0px;font-size:7px;line-height:10px;color:#e6e6e6;font-weight:400;transform:scaleX(0.863)">16000</div><div class="t" style="left:914.8px;top:247.0px;font-size:7px;line-height:10px;color:#e6e6e6;font-weight:400;transform:scaleX(0.863)">17000</div><div class="t" style="left:966.0px;top:247.0px;font-size:7px;line-height:10px;color:#e6e6e6;font-weight:400;transform:scaleX(0.863)">18000</div><div class="t" style="left:1017.1px;top:247.0px;font-size:7px;line-height:10px;color:#e6e6e6;font-weight:400;transform:scaleX(0.863)">19000</div><div class="t" style="left:1046.5px;top:247.0px;font-size:7px;line-height:10px;color:#e6e6e6;font-weight:400;transform:scaleX(0.952)">19999.902</div><div class="t" style="left:50.9px;top:506.8px;font-size:7px;line-height:10px;color:#e6e6e6;font-weight:400;transform:scaleX(0.811)">0Hz</div><div class="t" style="left:111.2px;top:506.8px;font-size:7px;line-height:10px;color:#e6e6e6;font-weight:400;transform:scaleX(0.911)">50</div><div class="t" style="left:169.2px;top:506.8px;font-size:7px;line-height:10px;color:#e6e6e6;font-weight:400;transform:scaleX(0.830)">100</div><div class="t" style="left:228.4px;top:506.8px;font-size:7px;line-height:10px;color:#e6e6e6;font-weight:400;transform:scaleX(0.830)">150</div><div class="t" style="left:287.2px;top:506.8px;font-size:7px;line-height:10px;color:#e6e6e6;font-weight:400;transform:scaleX(0.911)">200</div><div class="t" style="left:346.4px;top:506.8px;font-size:7px;line-height:10px;color:#e6e6e6;font-weight:400;transform:scaleX(0.911)">250</div><div class="t" style="left:405.7px;top:506.8px;font-size:7px;line-height:10px;color:#e6e6e6;font-weight:400;transform:scaleX(0.911)">300</div><div class="t" style="left:464.9px;top:506.8px;font-size:7px;line-height:10px;color:#e6e6e6;font-weight:400;transform:scaleX(0.911)">350</div><div class="t" style="left:524.2px;top:506.8px;font-size:7px;line-height:10px;color:#e6e6e6;font-weight:400;transform:scaleX(0.911)">400</div><div class="t" style="left:583.4px;top:506.8px;font-size:7px;line-height:10px;color:#e6e6e6;font-weight:400;transform:scaleX(0.911)">450</div><div class="t" style="left:642.7px;top:506.8px;font-size:7px;line-height:10px;color:#e6e6e6;font-weight:400;transform:scaleX(0.911)">500</div><div class="t" style="left:701.9px;top:506.8px;font-size:7px;line-height:10px;color:#e6e6e6;font-weight:400;transform:scaleX(0.911)">550</div><div class="t" style="left:761.2px;top:506.8px;font-size:7px;line-height:10px;color:#e6e6e6;font-weight:400;transform:scaleX(0.911)">600</div><div class="t" style="left:820.4px;top:506.8px;font-size:7px;line-height:10px;color:#e6e6e6;font-weight:400;transform:scaleX(0.911)">650</div><div class="t" style="left:879.7px;top:506.8px;font-size:7px;line-height:10px;color:#e6e6e6;font-weight:400;transform:scaleX(0.911)">700</div><div class="t" style="left:938.9px;top:506.8px;font-size:7px;line-height:10px;color:#e6e6e6;font-weight:400;transform:scaleX(0.911)">750</div><div class="t" style="left:998.2px;top:506.8px;font-size:7px;line-height:10px;color:#e6e6e6;font-weight:400;transform:scaleX(0.911)">800</div><div class="t" style="left:1057.4px;top:506.8px;font-size:7px;line-height:10px;color:#e6e6e6;font-weight:400;transform:scaleX(0.911)">850</div><div class="t" style="left:568.2px;top:211.9px;font-size:7.5px;line-height:10px;color:#f0dc00;font-weight:700;transform:scaleX(0.916)">10794.629Hz,0.04m/s^2</div><div class="t" style="left:568.2px;top:219.5px;font-size:7.5px;line-height:10px;color:#f0dc00;font-weight:700;transform:scaleX(0.913)">△f=2883.887Hz</div><div class="t" style="left:57.2px;top:283.6px;font-size:7px;line-height:10px;color:#ffe800;font-weight:700;transform:scaleX(0.876)">保持架损伤特征频率</div><div class="t" style="left:80.6px;top:380.7px;font-size:7.5px;line-height:10px;color:#f0dc00;font-weight:700;transform:scaleX(0.924)">49.805Hz,0.369m/s^2</div><div class="t" style="left:165.7px;top:409.3px;font-size:7px;line-height:10px;color:#ffe800;font-weight:700;transform:scaleX(0.876)">滚动体损伤特征频率</div>
<div class="t" style="left:6.6px;top:127.5px;font-size:7px;line-height:10px;color:#e6e6e6;transform-origin:50% 50%;transform:rotate(-90deg) scaleX(1.039)">[m/s^2]RMS</div>
<div class="t" style="left:14.9px;top:386.9px;font-size:7px;line-height:10px;color:#e6e6e6;transform-origin:50% 50%;transform:rotate(-90deg) scaleX(1.190)">[m/s^2]</div>
</body></html>
